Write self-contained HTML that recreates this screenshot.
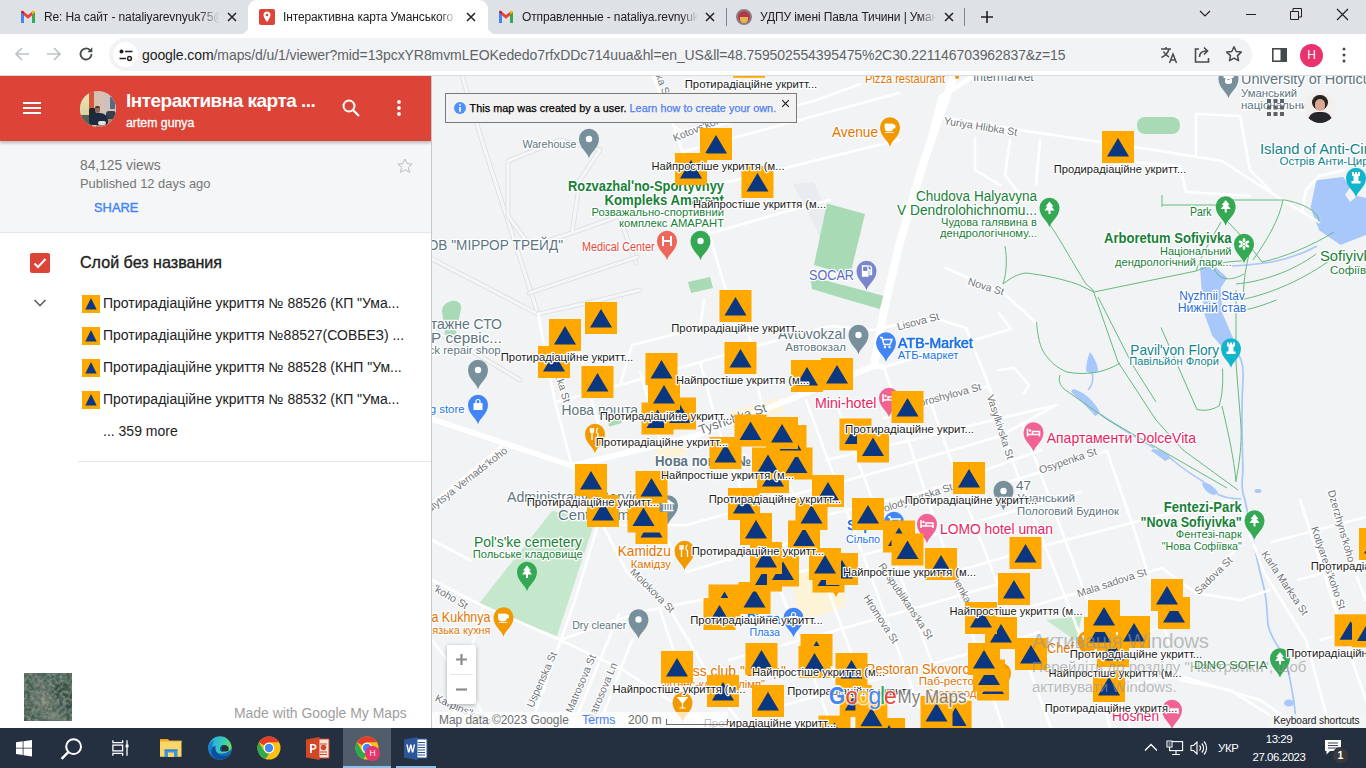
<!DOCTYPE html>
<html>
<head>
<meta charset="utf-8">
<style>
*{box-sizing:border-box;margin:0;padding:0}
html,body{width:1366px;height:768px;overflow:hidden;background:#fff;font-family:"Liberation Sans",sans-serif;}
.abs{position:absolute}
#tabs{position:absolute;left:0;top:0;width:1366px;height:34px;background:#dee1e6}
#toolbar{position:absolute;left:0;top:34px;width:1366px;height:42px;background:#fff;border-bottom:1px solid #dadce0}
.tabtxt{position:absolute;top:10px;font-size:12px;letter-spacing:-.12px;color:#202124;white-space:nowrap;overflow:hidden}
.tabx{position:absolute;top:9px;width:16px;height:16px}
#omni{position:absolute;left:109px;top:4px;width:1143px;height:33px;border-radius:17px;background:#f1f3f4}
#side{position:absolute;left:0;top:76px;width:431px;height:652px;background:#fff;overflow:hidden}
#shdr{position:absolute;left:0;top:0;width:431px;height:65px;background:#db4437;box-shadow:0 2px 3px rgba(0,0,0,.25)}
#sinfo{position:absolute;left:0;top:65px;width:431px;height:92px;background:#f5f6f7;border-bottom:1px solid #e6e6e6}
#map{position:absolute;left:432px;top:76px;width:934px;height:652px;background:#f1f3f4;overflow:hidden}
#task{position:absolute;left:0;top:728px;width:1366px;height:40px;background:#243040}
.row{position:absolute;left:103px;font-size:14px;color:#212121;white-space:nowrap}
.mk{position:absolute;width:18px;height:18px;left:82px;background:#ffa800;margin-top:-1px}
.mk:after{content:"";position:absolute;left:0;top:0;width:18px;height:18px;background:#0a3780;clip-path:polygon(50% 16.7%,18.5% 80.5%,81.5% 80.5%)}
</style>
</head>
<body>
<!-- ================= TAB STRIP ================= -->
<div id="tabs">
  <!-- active tab -->
  <div class="abs" style="left:248px;top:0;width:240px;height:34px;background:#fff;border-radius:9px 9px 0 0"></div>
  <div class="abs" style="left:240px;top:26px;width:8px;height:8px;background:radial-gradient(circle at 0 0,#dee1e6 8px,#fff 8.5px)"></div>
  <div class="abs" style="left:488px;top:26px;width:8px;height:8px;background:radial-gradient(circle at 100% 0,#dee1e6 8px,#fff 8.5px)"></div>
  <!-- tab 1 -->
  <svg class="abs" style="left:20px;top:10px" width="16" height="14" viewBox="0 0 16 14"><path d="M1 13V2.2L3 1l5 4 5-4 2 1.2V13h-3V5.5L8 8.7 4 5.5V13z" fill="#ea4335"/><path d="M1 13V2.2L4 4.6V13z" fill="#4285f4"/><path d="M15 13V2.2L12 4.6V13z" fill="#34a853"/><path d="M12 4.6l3-2.4V2.2C15 .9 13.6.5 12.8 1.2L12 1.8z" fill="#fbbc04"/><path d="M4 4.6L1 2.2C1 .9 2.4.5 3.2 1.2L4 1.8z" fill="#c5221f"/></svg>
  <div class="tabtxt" style="left:44px;width:176px;-webkit-mask-image:linear-gradient(90deg,#000 88%,transparent)">Re: На сайт - nataliyarevnyuk75@g</div>
  <svg class="tabx" style="left:224px" viewBox="0 0 16 16"><path d="M4 4l8 8M12 4l-8 8" stroke="#202124" stroke-width="1.5"/></svg>
  <!-- tab 2 -->
  <div class="abs" style="left:259px;top:9px;width:16px;height:16px;background:#db4437;border-radius:2px"></div>
  <svg class="abs" style="left:259px;top:9px" width="16" height="16" viewBox="0 0 16 16"><path d="M8 2.5c-2 0-3.5 1.5-3.500 3.400 0 2.600 3.500 7 3.500 7s3.500-4.400 3.500-7C11.500 4 10 2.500 8 2.500z" fill="#fff"/><circle cx="8" cy="6" r="1.300" fill="#db4437"/></svg>
  <div class="tabtxt" style="left:283px;width:174px;-webkit-mask-image:linear-gradient(90deg,#000 90%,transparent)">Інтерактивна карта Уманського р</div>
  <svg class="tabx" style="left:463px" viewBox="0 0 16 16"><path d="M4 4l8 8M12 4l-8 8" stroke="#202124" stroke-width="1.5"/></svg>
  <!-- tab 3 -->
  <svg class="abs" style="left:498px;top:10px" width="16" height="14" viewBox="0 0 16 14"><path d="M1 13V2.2L3 1l5 4 5-4 2 1.2V13h-3V5.5L8 8.7 4 5.5V13z" fill="#ea4335"/><path d="M1 13V2.2L4 4.6V13z" fill="#4285f4"/><path d="M15 13V2.2L12 4.6V13z" fill="#34a853"/><path d="M12 4.6l3-2.400V2.200C15 .9 13.600.5 12.800 1.200L12 1.800z" fill="#fbbc04"/><path d="M4 4.600L1 2.200C1 .9 2.400.5 3.200 1.200L4 1.800z" fill="#c5221f"/></svg>
  <div class="tabtxt" style="left:522px;width:176px;-webkit-mask-image:linear-gradient(90deg,#000 90%,transparent)">Отправленные - nataliya.revnyuk</div>
  <svg class="tabx" style="left:702px" viewBox="0 0 16 16"><path d="M4 4l8 8M12 4l-8 8" stroke="#202124" stroke-width="1.5"/></svg>
  <div class="abs" style="left:726px;top:8px;width:1px;height:18px;background:#80868b"></div>
  <!-- tab 4 -->
  <div class="abs" style="left:736px;top:9px;width:16px;height:16px;border-radius:8px;background:#b23a48;border:2px solid #8a7f86"></div>
  <div class="abs" style="left:740px;top:17px;width:8px;height:6px;background:#e8b64c;border-radius:0 0 4px 4px"></div>
  <div class="tabtxt" style="left:760px;width:176px;-webkit-mask-image:linear-gradient(90deg,#000 90%,transparent)">УДПУ імені Павла Тичини | Умань</div>
  <svg class="tabx" style="left:941px" viewBox="0 0 16 16"><path d="M4 4l8 8M12 4l-8 8" stroke="#202124" stroke-width="1.5"/></svg>
  <div class="abs" style="left:964px;top:8px;width:1px;height:18px;background:#80868b"></div>
  <svg class="abs" style="left:979px;top:9px" width="16" height="16" viewBox="0 0 16 16"><path d="M8 2v12M2 8h12" stroke="#202124" stroke-width="1.600"/></svg>
  <!-- window controls -->
  <svg class="abs" style="left:1198px;top:8px" width="14" height="12" viewBox="0 0 14 12"><path d="M2 3l5 5 5-5" stroke="#202124" stroke-width="1.200" fill="none"/></svg>
  <div class="abs" style="left:1246px;top:14px;width:10px;height:1px;background:#202124"></div>
  <svg class="abs" style="left:1290px;top:8px" width="12" height="12" viewBox="0 0 12 12"><path d="M.5 3.500h8v8h-8z M3 3.500V.5h8.500v8.500H8.500" stroke="#202124" stroke-width="1" fill="none"/></svg>
  <svg class="abs" style="left:1336px;top:8px" width="13" height="13" viewBox="0 0 13 13"><path d="M1 1l11 11M12 1L1 12" stroke="#202124" stroke-width="1.200"/></svg>
</div>
<!-- ================= TOOLBAR ================= -->
<div id="toolbar">
  <svg class="abs" style="left:14px;top:12px" width="16" height="16" viewBox="0 0 16 16"><path d="M15 8H2M8 2L2 8l6 6" stroke="#bdc1c6" stroke-width="1.700" fill="none"/></svg>
  <svg class="abs" style="left:46px;top:12px" width="16" height="16" viewBox="0 0 16 16"><path d="M1 8h13M8 2l6 6-6 6" stroke="#bdc1c6" stroke-width="1.700" fill="none"/></svg>
  <svg class="abs" style="left:78px;top:12px" width="16" height="16" viewBox="0 0 16 16"><path d="M13.500 8a5.500 5.500 0 1 1-1.700-4" stroke="#474a4d" stroke-width="1.800" fill="none"/><path d="M14.300 1.300v5h-5z" fill="#474a4d"/></svg>
  <div id="omni">
    <div class="abs" style="left:4px;top:4px;width:25px;height:25px;border-radius:13px;background:#fff"></div>
    <svg class="abs" style="left:9px;top:9px" width="16" height="16" viewBox="0 0 16 16"><path d="M7 4.500h7.500M1.500 11.500h6.500" stroke="#202124" stroke-width="1.600" fill="none"/><circle cx="3.500" cy="4.500" r="2" fill="#202124"/><circle cx="11.500" cy="11.500" r="1.900" fill="none" stroke="#202124" stroke-width="1.500"/></svg>
    <div class="abs" style="left:33px;top:9px;font-size:14px;color:#5f6368;white-space:nowrap;letter-spacing:-0.083px"><span style="color:#202124">google.com</span>/maps/d/u/1/viewer?mid=13pcxYR8mvmLEOKededo7rfxDDc714uua&amp;hl=en_US&amp;ll=48.759502554395475%2C30.221146703962837&amp;z=15</div>
    <!-- translate -->
    <svg class="abs" style="left:1050px;top:7px" width="20" height="20" viewBox="0 0 20 20"><path d="M2 4h10M7 2v2M10 4c-.8 3.500-3.500 6.500-7.500 8.500M4.500 6.500c1.200 2.500 3 4.300 5.500 5.500" stroke="#474a4d" stroke-width="1.500" fill="none"/><path d="M10.500 18l3.500-9 3.500 9M11.800 15h4.500" stroke="#474a4d" stroke-width="1.500" fill="none"/></svg>
    <!-- share -->
    <svg class="abs" style="left:1083px;top:7px" width="20" height="20" viewBox="0 0 20 20"><path d="M7 4H3.500v13h13v-4" stroke="#474a4d" stroke-width="1.600" fill="none"/><path d="M7.500 12c0-4 2.500-6 7-6M12 2.500L15.500 6 12 9.500" stroke="#474a4d" stroke-width="1.600" fill="none"/></svg>
    <!-- star -->
    <svg class="abs" style="left:1115px;top:6px" width="20" height="20" viewBox="0 0 20 20"><path d="M10 2.800l2.200 4.700 5.100.6-3.800 3.500 1 5.100L10 14.200l-4.500 2.500 1-5.100L2.700 8.100l5.100-.6z" stroke="#474a4d" stroke-width="1.500" fill="none" stroke-linejoin="round"/></svg>
  </div>
  <!-- side panel -->
  <svg class="abs" style="left:1272px;top:14px" width="15" height="14" viewBox="0 0 15 14"><rect x=".8" y=".8" width="13.400" height="12.400" fill="none" stroke="#474a4d" stroke-width="1.600"/><rect x="8.500" y="1" width="5.500" height="12" fill="#474a4d"/></svg>
  <div class="abs" style="left:1300px;top:10px;width:23px;height:23px;border-radius:12px;background:#e8336d;color:#fff;font-size:12px;text-align:center;line-height:23px">H</div>
  <svg class="abs" style="left:1341px;top:12px" width="6" height="18" viewBox="0 0 6 18"><circle cx="3" cy="3" r="1.500" fill="#474a4d"/><circle cx="3" cy="9" r="1.500" fill="#474a4d"/><circle cx="3" cy="15" r="1.500" fill="#474a4d"/></svg>
</div>
<!-- ================= SIDEBAR ================= -->
<div id="side">
  <div id="sinfo">
    <div class="abs" style="left:80px;top:17px;font-size:13.800px;color:#757575">84,125 views</div>
    <div class="abs" style="left:80px;top:34.800px;font-size:12.900px;color:#757575">Published 12 days ago</div>
    <div class="abs" style="left:94px;top:59px;font-size:12.900px;color:#4285f4;-webkit-text-stroke:.4px #4285f4">SHARE</div>
    <svg class="abs" style="left:396px;top:16px" width="18" height="18" viewBox="0 0 18 18"><path d="M9 2l2.100 4.600 5 .5-3.700 3.300 1.100 4.900L9 12.800l-4.500 2.500 1.100-4.900L1.900 7.100l5-.5z" stroke="#bdbdbd" stroke-width="1" fill="none"/></svg>
  </div>
  <div id="shdr">
    <svg class="abs" style="left:22px;top:25px" width="20" height="14" viewBox="0 0 20 14"><path d="M1 2h18M1 7h18M1 12h18" stroke="#fff" stroke-width="2"/></svg>
    <div class="abs" id="avatar" style="left:80px;top:15px;width:36px;height:36px;border-radius:18px;overflow:hidden;background:#d9c0b2">
      <div class="abs" style="left:0;top:0;width:9px;height:26px;background:linear-gradient(#efe6b8,#d8cfa0)"></div>
      <div class="abs" style="left:9px;top:0;width:5px;height:20px;background:#d6563a"></div>
      <div class="abs" style="left:24px;top:2px;width:12px;height:34px;background:#cfc2bd"></div>
      <div class="abs" style="left:30px;top:6px;width:5px;height:12px;background:#5b6a80"></div>
      <div class="abs" style="left:0;top:24px;width:12px;height:12px;background:#5a5f58"></div>
      <div class="abs" style="left:9px;top:17px;width:7px;height:16px;background:#25272b;border-radius:2px"></div>
      <div class="abs" style="left:26px;top:20px;width:10px;height:9px;background:#3a3f4a;border-radius:3px"></div>
      <div class="abs" style="left:16px;top:28px;width:20px;height:8px;background:#a8826c"></div>
      <div class="abs" style="left:10px;top:22px;width:18px;height:12px;background:#1d2a42;border-radius:6px 8px 3px 3px"></div>
      <div class="abs" style="left:14.500px;top:15px;width:5px;height:7px;background:#8a6c5e;border-radius:2.500px"></div>
      <div class="abs" style="left:14.500px;top:14.500px;width:5px;height:2.500px;background:#4a3a32;border-radius:2px 2px 0 0"></div>
      <div class="abs" style="left:18px;top:30px;width:8px;height:4px;background:#e4e0e0;border-radius:2px"></div>
    </div>
    <div class="abs" style="left:126px;top:13.500px;font-size:19px;color:#fff;white-space:nowrap;font-weight:bold;letter-spacing:-.52px">Інтерактивна карта ...</div>
    <div class="abs" style="left:126px;top:40px;font-size:12.300px;color:#fff;white-space:nowrap;-webkit-text-stroke:.3px #fff">artem gunya</div>
    <svg class="abs" style="left:340px;top:21px" width="22" height="22" viewBox="0 0 22 22"><circle cx="9" cy="9" r="5.500" stroke="#fff" stroke-width="2" fill="none"/><path d="M13 13l6 6" stroke="#fff" stroke-width="2.200"/></svg>
    <svg class="abs" style="left:396px;top:22px" width="6" height="20" viewBox="0 0 6 20"><circle cx="3" cy="4" r="1.900" fill="#fff"/><circle cx="3" cy="10" r="1.900" fill="#fff"/><circle cx="3" cy="16" r="1.900" fill="#fff"/></svg>
  </div>
  <!-- layer -->
  <div class="abs" style="left:30px;top:177px;width:20px;height:20px;border-radius:2px;background:#db4437"></div>
  <svg class="abs" style="left:30px;top:177px" width="20" height="20" viewBox="0 0 20 20"><path d="M4.500 10.500l3.500 3.500 7.500-8" stroke="#fff" stroke-width="2" fill="none"/></svg>
  <div class="abs" style="left:80px;top:177.200px;font-size:16.100px;color:#212121;-webkit-text-stroke:.35px #212121">Слой без названия</div>
  <svg class="abs" style="left:33px;top:222px" width="14" height="10" viewBox="0 0 14 10"><path d="M1.500 2l5.500 5.500L12.500 2" stroke="#616161" stroke-width="1.600" fill="none"/></svg>
  <div class="mk" style="top:220px"></div><div class="row" style="top:219px">Протирадіаційне укриття № 88526 (КП "Ума...</div>
  <div class="mk" style="top:252px"></div><div class="row" style="top:251px">Протирадіаційне укриття №88527(СОВБЕЗ) ...</div>
  <div class="mk" style="top:284px"></div><div class="row" style="top:283px">Протирадіаційне укриття № 88528 (КНП "Ум...</div>
  <div class="mk" style="top:316px"></div><div class="row" style="top:315px">Протирадіаційне укриття № 88532 (КП "Ума...</div>
  <div class="row" style="top:347px">... 359 more</div>
  <div class="abs" style="left:78px;top:385px;width:353px;height:1px;background:#e6e6e6"></div>
  <!-- satellite thumb -->
  <div class="abs" id="sat" style="left:24px;top:597px;width:48px;height:48px;overflow:hidden;background:
radial-gradient(ellipse 13px 11px at 37px 19px,rgba(30,52,44,.95),rgba(30,52,44,0) 100%),
radial-gradient(ellipse 7px 14px at 46px 30px,rgba(36,58,52,.9),rgba(36,58,52,0) 100%),
radial-gradient(ellipse 17px 19px at 20px 27px,rgba(124,124,112,.95),rgba(112,114,102,0) 100%),
radial-gradient(ellipse 13px 7px at 30px 44px,rgba(134,132,120,.85),rgba(120,120,110,0) 100%),
radial-gradient(ellipse 10px 8px at 14px 8px,rgba(100,112,100,.8),rgba(96,108,96,0) 100%),
#40584e"><svg width="48" height="48" style="position:absolute;left:0;top:0"><filter id="sn" x="0" y="0" width="100%" height="100%"><feTurbulence type="fractalNoise" baseFrequency=".28" numOctaves="3" seed="7"/><feColorMatrix type="matrix" values="0 0 0 0 .56  0 0 0 0 .56  0 0 0 0 .47  1.15 0 0 0 -.42"/></filter><filter id="sd" x="0" y="0" width="100%" height="100%"><feTurbulence type="fractalNoise" baseFrequency=".22" numOctaves="3" seed="23"/><feColorMatrix type="matrix" values="0 0 0 0 .1  0 0 0 0 .18  0 0 0 0 .15  0 1.3 0 0 -.42"/></filter><rect width="48" height="48" filter="url(#sd)"/><rect width="48" height="48" filter="url(#sn)"/></svg></div>
  <div class="abs" style="left:234px;top:629px;font-size:13.950px;color:#9e9e9e;white-space:nowrap">Made with Google My Maps</div>
</div>
<div class="abs" style="left:431px;top:76px;width:1px;height:652px;background:#c8c8c8"></div>
<!-- ================= MAP ================= -->
<div id="map">
<!--MAP-START-->
<svg class="abs" style="left:0;top:0" width="934" height="652" viewBox="432 76 934 652" font-family="Liberation Sans, sans-serif">
<rect x="431" y="76" width="935" height="652" fill="#f1f3f4"/>
<path d="M552 511L596 518 557 636 536 628 520 621 478 605z" fill="#c5e8cc"/>
<path d="M793 184L814 182 840 246 829 257 810 216z" fill="#e9ebee"/>
<path d="M827 203.500L865 214 850 275.500 814 265z" fill="#a8dab5"/>
<path d="M810 276L835 283 858 289 884 296 880 309 845 299 812 289z" fill="#a8dab5"/>
<rect x="1137" y="117" width="43" height="17" rx="8" fill="#a8dab5"/>
<path d="M688 282L710 277 713 288 691 293z" fill="#a8dab5"/>
<path d="M449 302c6-3 13 0 12 7l-5 24c-2 6-10 6-11 0l-3-22c0-4 3-8 7-9z" fill="#a8dab5"/>
<path d="M1046 620L1082 616 1076 641z" fill="#c5e8cc"/>
<rect x="608" y="418" width="13" height="7" fill="#a8dab5" transform="rotate(-15 614 421)"/>
<path d="M790 576L838 566 846 606 800 622z" fill="#fdf3d6"/>
<path d="M728 412L780 398 784 411 732 425z" fill="#fdf3d6"/><path d="M655 447L684 440 687 454 659 461z" fill="#fdf3d6"/>
<path d="M1317.200 181.300L1342.600 177.900 1349 187.200 1343.900 194.900 1349.900 203.400 1357.500 197 1366 199V234L1340.500 243.700 1320 229.700 1311.600 207.600z" fill="#a8c7fa" stroke="#a8c7fa" stroke-width="2" stroke-linejoin="round"/>
<path d="M1201 267L1215 268 1226 278 1219.500 288 1221.600 314 1234 343 1238 350 1228 352 1213 335 1205.500 314 1202.500 288z" fill="#a8c7fa" stroke="#a8c7fa" stroke-width="2" stroke-linejoin="round"/>
<path d="M1090 352c4 5 8 13 8 19-3 3-9 3-12 0 0-7 2-14 4-19z" fill="#a8c7fa"/>
<path d="M1073 389c10 2 22 12 27 24l-5 3c-8-10-18-18-24-24z" fill="#a8c7fa"/>
<path d="M1153 449c7 0 15 4 18 9l-6 3c-5-4-10-8-14-10z" fill="#a8c7fa"/>
<path d="M1203 482c6 1 12 5 15 11l-4 2c-6-1-10-6-12-11z" fill="#a8c7fa"/>
<path d="M1092 372c2 8 0 14-4 18M1100 414c20 14 38 24 54 34M1170 458c12 10 24 18 34 24M1217 494c8 4 16 5 24 5" stroke="#a8c7fa" stroke-width="1.600" fill="none"/>
<path d="M1234 350C1242 356 1244 366 1243 380C1241 410 1242 440 1243 470C1242 482 1241 490 1245 500C1247 510 1249 520 1251 529C1254 545 1258 565 1264 588C1267 600 1267 612 1268 625C1270 634 1274 640 1277 645C1282 652 1285 658 1287 665C1290 678 1292 690 1294 702C1295 712 1296 720 1297 728" stroke="#a8c7fa" stroke-width="1.700" fill="none"/>
<path d="M1228 266c14 0 30-2 44-4 20-4 34-10 45-16" stroke="#a8c7fa" stroke-width="1.600" fill="none"/>
<ellipse cx="1289" cy="703" rx="5" ry="3.500" fill="#a8c7fa"/><ellipse cx="1258" cy="491" rx="3.500" ry="2" fill="#a8c7fa"/>
<path d="M462 76L485 150 538 314" stroke="#d9dce0" stroke-width="4.7" fill="none" stroke-linecap="round" stroke-linejoin="round"/>
<path d="M462 76L485 150 538 314" stroke="#f5f6f7" stroke-width="3.1999999999999997" fill="none" stroke-linecap="round" stroke-linejoin="round"/>
<path d="M508 161L508 216 530 246 572 233 619 216 636 263M572 233L580 180 600 150 560 140 508 161" stroke="#d9dce0" stroke-width="4.7" fill="none" stroke-linecap="round" stroke-linejoin="round"/>
<path d="M508 161L508 216 530 246 572 233 619 216 636 263M572 233L580 180 600 150 560 140 508 161" stroke="#f5f6f7" stroke-width="3.1999999999999997" fill="none" stroke-linecap="round" stroke-linejoin="round"/>
<path d="M432 259L538 314" stroke="#d9dce0" stroke-width="4.7" fill="none" stroke-linecap="round" stroke-linejoin="round"/>
<path d="M432 259L538 314" stroke="#f5f6f7" stroke-width="3.1999999999999997" fill="none" stroke-linecap="round" stroke-linejoin="round"/>
<path d="M538 314L600 300 640 290" stroke="#d9dce0" stroke-width="4.7" fill="none" stroke-linecap="round" stroke-linejoin="round"/>
<path d="M538 314L600 300 640 290" stroke="#f5f6f7" stroke-width="3.1999999999999997" fill="none" stroke-linecap="round" stroke-linejoin="round"/>
<path d="M432 330L470 350 520 380" stroke="#d9dce0" stroke-width="4.7" fill="none" stroke-linecap="round" stroke-linejoin="round"/>
<path d="M432 330L470 350 520 380" stroke="#f5f6f7" stroke-width="3.1999999999999997" fill="none" stroke-linecap="round" stroke-linejoin="round"/>
<path d="M529 293L637 257" stroke="#d9dce0" stroke-width="4.7" fill="none" stroke-linecap="round" stroke-linejoin="round"/>
<path d="M529 293L637 257" stroke="#f5f6f7" stroke-width="3.1999999999999997" fill="none" stroke-linecap="round" stroke-linejoin="round"/>
<path d="M538 314L555 402 572 466" stroke="#fff" stroke-width="2.6" fill="none" stroke-linecap="round" stroke-linejoin="round"/>
<path d="M653 76L674 127 704 216 725 288 750 339 761 402 772 440" stroke="#fff" stroke-width="2.6" fill="none" stroke-linecap="round" stroke-linejoin="round"/>
<path d="M674 127L687 133 814 101 860 84" stroke="#fff" stroke-width="2.6" fill="none" stroke-linecap="round" stroke-linejoin="round"/>
<path d="M682 152L899 93" stroke="#fff" stroke-width="2.6" fill="none" stroke-linecap="round" stroke-linejoin="round"/>
<path d="M695 190L899 140" stroke="#fff" stroke-width="2.6" fill="none" stroke-linecap="round" stroke-linejoin="round"/>
<path d="M712 233L784 212 830 200" stroke="#fff" stroke-width="2.6" fill="none" stroke-linecap="round" stroke-linejoin="round"/>
<path d="M555 402L620 385 700 362 760 345 830 326 874 330" stroke="#fff" stroke-width="2.6" fill="none" stroke-linecap="round" stroke-linejoin="round"/>
<path d="M600 430L584 372 578 330" stroke="#fff" stroke-width="2.6" fill="none" stroke-linecap="round" stroke-linejoin="round"/>
<path d="M640 372L660 440" stroke="#fff" stroke-width="2.6" fill="none" stroke-linecap="round" stroke-linejoin="round"/>
<path d="M700 362L718 428" stroke="#fff" stroke-width="2.6" fill="none" stroke-linecap="round" stroke-linejoin="round"/>
<path d="M620 385L632 345 700 328 704 300" stroke="#fff" stroke-width="2.6" fill="none" stroke-linecap="round" stroke-linejoin="round"/>
<path d="M432 504L504 444 538 453" stroke="#fff" stroke-width="2.6" fill="none" stroke-linecap="round" stroke-linejoin="round"/>
<path d="M432 580L483 606 560 640 620 668 700 720" stroke="#fff" stroke-width="2.6" fill="none" stroke-linecap="round" stroke-linejoin="round"/>
<path d="M432 540L470 560" stroke="#fff" stroke-width="2.6" fill="none" stroke-linecap="round" stroke-linejoin="round"/>
<path d="M432 640L470 690 490 728" stroke="#fff" stroke-width="2.6" fill="none" stroke-linecap="round" stroke-linejoin="round"/>
<path d="M483 606L450 728" stroke="#fff" stroke-width="2.6" fill="none" stroke-linecap="round" stroke-linejoin="round"/>
<path d="M572 466L602 512 575 600 530 728" stroke="#fff" stroke-width="2.6" fill="none" stroke-linecap="round" stroke-linejoin="round"/>
<path d="M619 614L572 728" stroke="#fff" stroke-width="2.6" fill="none" stroke-linecap="round" stroke-linejoin="round"/>
<path d="M632 640L598 728" stroke="#fff" stroke-width="2.6" fill="none" stroke-linecap="round" stroke-linejoin="round"/>
<path d="M560 640L640 612 700 600" stroke="#fff" stroke-width="2.6" fill="none" stroke-linecap="round" stroke-linejoin="round"/>
<path d="M572 466L627 572 670 610 729 708 745 728" stroke="#fff" stroke-width="2.6" fill="none" stroke-linecap="round" stroke-linejoin="round"/>
<path d="M598 525L687 525 793 495 899 466 1000 436 1056 405" stroke="#fff" stroke-width="2.6" fill="none" stroke-linecap="round" stroke-linejoin="round"/>
<path d="M602 512L660 500" stroke="#fff" stroke-width="2.6" fill="none" stroke-linecap="round" stroke-linejoin="round"/>
<path d="M640 470L655 520 687 572" stroke="#fff" stroke-width="2.6" fill="none" stroke-linecap="round" stroke-linejoin="round"/>
<path d="M687 572L720 562 800 540" stroke="#fff" stroke-width="2.6" fill="none" stroke-linecap="round" stroke-linejoin="round"/>
<path d="M660 610L690 700" stroke="#fff" stroke-width="2.6" fill="none" stroke-linecap="round" stroke-linejoin="round"/>
<path d="M718 428L760 540 800 640 832 728" stroke="#fff" stroke-width="2.6" fill="none" stroke-linecap="round" stroke-linejoin="round"/>
<path d="M772 440L810 540 850 650 880 728" stroke="#fff" stroke-width="2.6" fill="none" stroke-linecap="round" stroke-linejoin="round"/>
<path d="M806 400L850 520 886 617 927 728" stroke="#fff" stroke-width="2.6" fill="none" stroke-linecap="round" stroke-linejoin="round"/>
<path d="M835 400L880 520 918 625 956 728" stroke="#fff" stroke-width="2.6" fill="none" stroke-linecap="round" stroke-linejoin="round"/>
<path d="M884 367L914 458 958 590 1003 728" stroke="#fff" stroke-width="2.6" fill="none" stroke-linecap="round" stroke-linejoin="round"/>
<path d="M930 400L965 500 1000 590 1051 728" stroke="#fff" stroke-width="2.6" fill="none" stroke-linecap="round" stroke-linejoin="round"/>
<path d="M700 600L800 572 900 545 1000 515 1080 492" stroke="#fff" stroke-width="2.6" fill="none" stroke-linecap="round" stroke-linejoin="round"/>
<path d="M729 660L830 632 930 604 1005 582" stroke="#fff" stroke-width="2.6" fill="none" stroke-linecap="round" stroke-linejoin="round"/>
<path d="M760 712L860 684 960 656 1040 632" stroke="#fff" stroke-width="2.6" fill="none" stroke-linecap="round" stroke-linejoin="round"/>
<path d="M884 418L989 386" stroke="#fff" stroke-width="2.6" fill="none" stroke-linecap="round" stroke-linejoin="round"/>
<path d="M826 460L899 443 1056 405" stroke="#fff" stroke-width="2.6" fill="none" stroke-linecap="round" stroke-linejoin="round"/>
<path d="M817 517L925 492 1041 450" stroke="#fff" stroke-width="2.6" fill="none" stroke-linecap="round" stroke-linejoin="round"/>
<path d="M874 330L899 324 937 319 966 328 986 378 1000 418 1012 460 1035 521 1069 606 1100 690 1110 728" stroke="#fff" stroke-width="2.6" fill="none" stroke-linecap="round" stroke-linejoin="round"/>
<path d="M884 367L974 340 1011 329 999 313" stroke="#fff" stroke-width="2.6" fill="none" stroke-linecap="round" stroke-linejoin="round"/>
<path d="M999 370L1014 368 1029 385 1024 393" stroke="#fff" stroke-width="2.6" fill="none" stroke-linecap="round" stroke-linejoin="round"/>
<path d="M946 268L1006 295 1036 323" stroke="#fff" stroke-width="2.6" fill="none" stroke-linecap="round" stroke-linejoin="round"/>
<path d="M1022 423L1077 572 1098 627 1130 728" stroke="#fff" stroke-width="2.6" fill="none" stroke-linecap="round" stroke-linejoin="round"/>
<path d="M1005 483L1107 451 1137 538 1150 580 1180 680" stroke="#fff" stroke-width="2.6" fill="none" stroke-linecap="round" stroke-linejoin="round"/>
<path d="M954 572L1043 546 1154 517 1230 500" stroke="#fff" stroke-width="2.6" fill="none" stroke-linecap="round" stroke-linejoin="round"/>
<path d="M1005 614L1162 568 1196 593 1234 551" stroke="#fff" stroke-width="2.6" fill="none" stroke-linecap="round" stroke-linejoin="round"/>
<path d="M1040 650L1120 640 1160 628" stroke="#fff" stroke-width="2.6" fill="none" stroke-linecap="round" stroke-linejoin="round"/>
<path d="M1100 690L1180 676 1260 700 1300 728" stroke="#fff" stroke-width="2.6" fill="none" stroke-linecap="round" stroke-linejoin="round"/>
<path d="M937 116L1026 131 1154 150 1222 161 1281 199 1319 222" stroke="#fff" stroke-width="2.6" fill="none" stroke-linecap="round" stroke-linejoin="round"/>
<path d="M975 138L975 170 1000 185M1010 140L1005 175 1020 195M1040 140L1036 185" stroke="#fff" stroke-width="2.6" fill="none" stroke-linecap="round" stroke-linejoin="round"/>
<path d="M1102 143L1104 160 1180 166 1186 192 1250 196" stroke="#fff" stroke-width="2.6" fill="none" stroke-linecap="round" stroke-linejoin="round"/>
<path d="M1196 114L1196 156M1196 114L1240 116 1250 170 1270 190" stroke="#fff" stroke-width="2.6" fill="none" stroke-linecap="round" stroke-linejoin="round"/>
<path d="M1302 212L1306 190 1319 176 1345 170" stroke="#fff" stroke-width="2.6" fill="none" stroke-linecap="round" stroke-linejoin="round"/>
<path d="M1240 508L1264 572 1306 640 1330 728" stroke="#fff" stroke-width="2.6" fill="none" stroke-linecap="round" stroke-linejoin="round"/>
<path d="M1300 500L1320 560 1345 640 1366 700" stroke="#fff" stroke-width="2.6" fill="none" stroke-linecap="round" stroke-linejoin="round"/>
<path d="M1335 500L1350 560 1366 600" stroke="#fff" stroke-width="2.6" fill="none" stroke-linecap="round" stroke-linejoin="round"/>
<path d="M1272 542L1366 517" stroke="#fff" stroke-width="2.6" fill="none" stroke-linecap="round" stroke-linejoin="round"/>
<path d="M1298 580L1366 560" stroke="#fff" stroke-width="2.6" fill="none" stroke-linecap="round" stroke-linejoin="round"/>
<path d="M1320 640L1366 628" stroke="#fff" stroke-width="2.6" fill="none" stroke-linecap="round" stroke-linejoin="round"/>
<path d="M1196 593L1240 600 1270 590" stroke="#fff" stroke-width="2.6" fill="none" stroke-linecap="round" stroke-linejoin="round"/>
<path d="M1180 680L1230 690 1290 728" stroke="#fff" stroke-width="2.6" fill="none" stroke-linecap="round" stroke-linejoin="round"/>
<path d="M954 76L924 161 899 246 884 310 874 366" stroke="#fff" stroke-width="8" fill="none" stroke-linecap="round" stroke-linejoin="round"/>
<path d="M973 76L941 97 924 161" stroke="#fff" stroke-width="5" fill="none" stroke-linecap="round" stroke-linejoin="round"/>
<path d="M874 366L763 410 695 436 572 466" stroke="#fff" stroke-width="6" fill="none" stroke-linecap="round" stroke-linejoin="round"/>
<path d="M572 466L432 419" stroke="#fff" stroke-width="5.5" fill="none" stroke-linecap="round" stroke-linejoin="round"/>
<path d="M874 366L884 367" stroke="#fff" stroke-width="5" fill="none" stroke-linecap="round" stroke-linejoin="round"/>
<path d="M1050 225c10 14 24 40 36 59l7 6M1005 246c2 12 2 26-2 38M1003 284c8-6 14-10 23-11 18 2 36 6 51 11l17 8M1094 292L1196 271M1221 222c-8 14-18 30-25 49M1228 222c12 12 24 26 34 40M1196 271c14-6 30-10 46-10M1225 200h60c20 4 34 12 34 22M1262 262c20-4 50-16 72-30M1240 300c30-6 64-20 96-44M1236 284c24-2 56-12 80-30M1214 268c4 12 16 14 30 6M1252 240c-4 20-10 40-8 60M1283 200c-4 20-16 40-30 60M1162 205h60M1162 195v12" stroke="#66bb7f" stroke-width="1" fill="none"/>
<path d="M1093 290L1118 362 1156 420 1183 450 1238 490M1036.500 322c1 10 2 20 6.500 29 6 10 14 17 24 21 10 2 20 2 31 0 8-2 16-5 22-9M1060 375c-2 6 0 10 4 14l44 31 65 37 54 31M1098 297l34 67 24 38M1161 327.500l36 82c8 2 16 0 22-3.500 4-12 4-26 3.500-37.500M1236 290v73l5 63c1 20-2 38-5 55M1244.600 310c10-2 22-6 32-10M1222 406c6 26 12 52 14 76" stroke="#66bb7f" stroke-width="1" fill="none"/>
<text x="980" y="130" transform="rotate(9 980 130)" font-size="10.5" fill="#6f7478" stroke="#fff" stroke-width="2.200" paint-order="stroke" stroke-linejoin="round" text-anchor="middle">Yuriya Hlibka St</text>
<text x="985" y="290" transform="rotate(17 985 290)" font-size="10.5" fill="#6f7478" stroke="#fff" stroke-width="2.200" paint-order="stroke" stroke-linejoin="round" text-anchor="middle">Nova St</text>
<text x="919" y="325" transform="rotate(-15 919 325)" font-size="10.5" fill="#6f7478" stroke="#fff" stroke-width="2.200" paint-order="stroke" stroke-linejoin="round" text-anchor="middle">Lisova St</text>
<text x="997" y="428" transform="rotate(72 997 428)" font-size="10.5" fill="#6f7478" stroke="#fff" stroke-width="2.200" paint-order="stroke" stroke-linejoin="round" text-anchor="middle">Vasylkivska St</text>
<text x="1069" y="464" transform="rotate(-19 1069 464)" font-size="10.5" fill="#6f7478" stroke="#fff" stroke-width="2.200" paint-order="stroke" stroke-linejoin="round" text-anchor="middle">Osypenka St</text>
<text x="948" y="399" transform="rotate(-15 948 399)" font-size="10.5" fill="#6f7478" stroke="#fff" stroke-width="2.200" paint-order="stroke" stroke-linejoin="round" text-anchor="middle">Voroshylova St</text>
<text x="467" y="484" transform="rotate(-38 467 484)" font-size="10.5" fill="#6f7478" stroke="#fff" stroke-width="2.200" paint-order="stroke" stroke-linejoin="round" text-anchor="middle">vulytsya Vernads&#39;koho</text>
<text x="650" y="593" transform="rotate(45 650 593)" font-size="10.5" fill="#6f7478" stroke="#fff" stroke-width="2.200" paint-order="stroke" stroke-linejoin="round" text-anchor="middle">Molokova St</text>
<text x="545" y="681" transform="rotate(-66 545 681)" font-size="10.5" fill="#6f7478" stroke="#fff" stroke-width="2.200" paint-order="stroke" stroke-linejoin="round" text-anchor="middle">Uspenska St</text>
<text x="584" y="685" transform="rotate(-67 584 685)" font-size="10.5" fill="#6f7478" stroke="#fff" stroke-width="2.200" paint-order="stroke" stroke-linejoin="round" text-anchor="middle">Matrosova St</text>
<text x="605" y="694" transform="rotate(-67 605 694)" font-size="10.5" fill="#6f7478" stroke="#fff" stroke-width="2.200" paint-order="stroke" stroke-linejoin="round" text-anchor="middle">Matrosova Ln</text>
<text x="878" y="621" transform="rotate(57 878 621)" font-size="10.5" fill="#6f7478" stroke="#fff" stroke-width="2.200" paint-order="stroke" stroke-linejoin="round" text-anchor="middle">Hromova St</text>
<text x="903" y="603" transform="rotate(56 903 603)" font-size="10.5" fill="#6f7478" stroke="#fff" stroke-width="2.200" paint-order="stroke" stroke-linejoin="round" text-anchor="middle">Respublikans&#39;ka St</text>
<text x="1113" y="586" transform="rotate(-18 1113 586)" font-size="10.5" fill="#6f7478" stroke="#fff" stroke-width="2.200" paint-order="stroke" stroke-linejoin="round" text-anchor="middle">Mala sadova St</text>
<text x="1216" y="578" transform="rotate(-45 1216 578)" font-size="10.5" fill="#6f7478" stroke="#fff" stroke-width="2.200" paint-order="stroke" stroke-linejoin="round" text-anchor="middle">Sadova St</text>
<text x="1282" y="585" transform="rotate(56 1282 585)" font-size="10.5" fill="#6f7478" stroke="#fff" stroke-width="2.200" paint-order="stroke" stroke-linejoin="round" text-anchor="middle">Karla Marksa St</text>
<text x="1325" y="569" transform="rotate(71 1325 569)" font-size="10.5" fill="#6f7478" stroke="#fff" stroke-width="2.200" paint-order="stroke" stroke-linejoin="round" text-anchor="middle">Kotlyarevs&#39;koho St</text>
<text x="1338" y="527" transform="rotate(74 1338 527)" font-size="10.5" fill="#6f7478" stroke="#fff" stroke-width="2.200" paint-order="stroke" stroke-linejoin="round" text-anchor="middle">Dzerzhyns&#39;koho</text>
<text x="734" y="423" transform="rotate(-19 734 423)" font-size="13" fill="#6f7478" stroke="#fff" stroke-width="2.200" paint-order="stroke" stroke-linejoin="round" text-anchor="middle">Tyshchka St</text>
<text x="449" y="600" transform="rotate(30 449 600)" font-size="10.5" fill="#6f7478" stroke="#fff" stroke-width="2.200" paint-order="stroke" stroke-linejoin="round" text-anchor="middle">&#39;koho St</text>
<text x="462" y="713" transform="rotate(24 462 713)" font-size="10.5" fill="#6f7478" stroke="#fff" stroke-width="2.200" paint-order="stroke" stroke-linejoin="round" text-anchor="middle">Karpins&#39;koho</text>
<text x="916" y="502" transform="rotate(-18 916 502)" font-size="10.5" fill="#6f7478" stroke="#fff" stroke-width="2.200" paint-order="stroke" stroke-linejoin="round" text-anchor="middle">Volodymyrska St</text>
<text x="558" y="385" transform="rotate(72 558 385)" font-size="10.5" fill="#6f7478" stroke="#fff" stroke-width="2.200" paint-order="stroke" stroke-linejoin="round" text-anchor="middle">P...ka St</text>
<text x="701" y="131" transform="rotate(-22 701 131)" font-size="10.5" fill="#6f7478" stroke="#fff" stroke-width="2.200" paint-order="stroke" stroke-linejoin="round" text-anchor="middle">Kotovs&#39;koho</text>
<text x="658" y="82" transform="rotate(68 658 82)" font-size="10.5" fill="#6f7478" stroke="#fff" stroke-width="2.200" paint-order="stroke" stroke-linejoin="round" text-anchor="middle">vska St</text>
<text x="955" y="584" transform="rotate(62 955 584)" font-size="10.5" fill="#6f7478" stroke="#fff" stroke-width="2.200" paint-order="stroke" stroke-linejoin="round" text-anchor="middle">Shevchenka St</text>
<path d="M589 158.3c-1.200-6-10-10.300-10-19.600a10 10 0 0 1 20 0c0 9.300-8.800 13.600-10 19.600z" fill="#78909c"/>
<circle cx="589" cy="139" r="3.200" fill="#fff"/>
<text x="576.5" y="148" font-size="11.5" fill="#5c7582" stroke="#fff" stroke-width="2.6" paint-order="stroke" stroke-linejoin="round" text-anchor="end" textLength="54" lengthAdjust="spacingAndGlyphs">Warehouse</text>
<text x="724" y="191" font-size="14" fill="#188038" stroke="#fff" stroke-width="2.6" paint-order="stroke" stroke-linejoin="round" text-anchor="end" font-weight="bold" textLength="156" lengthAdjust="spacingAndGlyphs">Rozvazhal&#697;no-Sportyvnyy</text>
<text x="724" y="204.5" font-size="14" fill="#188038" stroke="#fff" stroke-width="2.6" paint-order="stroke" stroke-linejoin="round" text-anchor="end" font-weight="bold" textLength="119.5" lengthAdjust="spacingAndGlyphs">Kompleks Amarant</text>
<text x="724" y="215.5" font-size="11.5" fill="#188038" stroke="#fff" stroke-width="2.6" paint-order="stroke" stroke-linejoin="round" text-anchor="end" textLength="132.5" lengthAdjust="spacingAndGlyphs">Розважально-спортивний</text>
<text x="724" y="226.5" font-size="11.5" fill="#188038" stroke="#fff" stroke-width="2.6" paint-order="stroke" stroke-linejoin="round" text-anchor="end" textLength="105" lengthAdjust="spacingAndGlyphs">комплекс АМАРАНТ</text>
<path d="M700.5 260.3c-1.200-6-10-10.300-10-19.600a10 10 0 0 1 20 0c0 9.300-8.800 13.600-10 19.600z" fill="#34a853"/>
<circle cx="700.5" cy="241" r="3.200" fill="#fff"/>
<path d="M667 260.3c-1.200-6-10-10.300-10-19.600a10 10 0 0 1 20 0c0 9.300-8.800 13.600-10 19.600z" fill="#ee675c"/>
<path d="M663 236v10M671 236v10M663 241h8" stroke="#fff" stroke-width="2" fill="none"/>
<text x="654.5" y="251" font-size="12" fill="#e5483a" stroke="#fff" stroke-width="2.6" paint-order="stroke" stroke-linejoin="round" text-anchor="end" textLength="72.5" lengthAdjust="spacingAndGlyphs">Medical Center</text>
<text x="563" y="249.5" font-size="14.5" fill="#5c7582" stroke="#fff" stroke-width="2.6" paint-order="stroke" stroke-linejoin="round" text-anchor="end" textLength="143" lengthAdjust="spacingAndGlyphs">ТОВ "МІРРОР ТРЕЙД"</text>
<path d="M890 146.8c-1.200-6-10-10.300-10-19.600a10 10 0 0 1 20 0c0 9.300-8.800 13.600-10 19.600z" fill="#f29900"/>
<path d="M885 124.0h8v4a3 3 0 0 1-3 3h-2a3 3 0 0 1-3-3zM893 125.0h2v3h-2M885 132.5h9" fill="#fff" stroke="#fff" stroke-width=".8"/>
<text x="878" y="137" font-size="14.5" fill="#e37400" stroke="#fff" stroke-width="2.6" paint-order="stroke" stroke-linejoin="round" text-anchor="end" textLength="46" lengthAdjust="spacingAndGlyphs">Avenue</text>
<text x="945" y="83" font-size="12" fill="#e37400" stroke="#fff" stroke-width="2.6" paint-order="stroke" stroke-linejoin="round" text-anchor="end" textLength="80" lengthAdjust="spacingAndGlyphs">Pizza restaurant</text>
<text x="973" y="80.5" font-size="12" fill="#5c7582" stroke="#fff" stroke-width="2.6" paint-order="stroke" stroke-linejoin="round" text-anchor="start">Intermarket</text>
<circle cx="957" cy="77" r="2" fill="#f29900"/>
<text x="1037" y="200.5" font-size="14" fill="#188038" stroke="#fff" stroke-width="2.6" paint-order="stroke" stroke-linejoin="round" text-anchor="end" textLength="121" lengthAdjust="spacingAndGlyphs">Chudova Halyavyna</text>
<text x="1037" y="214.5" font-size="14" fill="#188038" stroke="#fff" stroke-width="2.6" paint-order="stroke" stroke-linejoin="round" text-anchor="end" textLength="140" lengthAdjust="spacingAndGlyphs">V Dendrolohichnomu...</text>
<text x="1037" y="226" font-size="11.5" fill="#188038" stroke="#fff" stroke-width="2.6" paint-order="stroke" stroke-linejoin="round" text-anchor="end" textLength="96" lengthAdjust="spacingAndGlyphs">Чудова галявина в</text>
<text x="1037" y="237" font-size="11.5" fill="#188038" stroke="#fff" stroke-width="2.6" paint-order="stroke" stroke-linejoin="round" text-anchor="end" textLength="97" lengthAdjust="spacingAndGlyphs">дендрологічному...</text>
<path d="M1049.5 227.3c-1.200-6-10-10.300-10-19.600a10 10 0 0 1 20 0c0 9.300-8.800 13.600-10 19.600z" fill="#34a853"/>
<path d="M1049.5 201.5l4 5h-2l3 4h-4v3.500h-2v-3.500h-4l3-4h-2z" fill="#fff"/>
<path d="M1228.5 98.3c-1.200-6-10-10.300-10-19.600a10 10 0 0 1 20 0c0 9.300-8.800 13.600-10 19.600z" fill="#78909c"/>
<path d="M1222.5 77l6-3 6 3-6 3zM1225.0 79v3.500c2 2 5 2 7 0v-3.500" fill="#fff"/>
<text x="1241" y="84" font-size="14.5" fill="#5c7582" stroke="#fff" stroke-width="2.6" paint-order="stroke" stroke-linejoin="round" text-anchor="start">University of Horticu</text>
<text x="1241" y="96.5" font-size="11.5" fill="#5c7582" stroke="#fff" stroke-width="2.6" paint-order="stroke" stroke-linejoin="round" text-anchor="start" textLength="56" lengthAdjust="spacingAndGlyphs">Уманський</text>
<text x="1241" y="108.5" font-size="11.5" fill="#5c7582" stroke="#fff" stroke-width="2.6" paint-order="stroke" stroke-linejoin="round" text-anchor="start">національни</text>
<text x="1260" y="153.5" font-size="14.8" fill="#12858d" stroke="#fff" stroke-width="2.6" paint-order="stroke" stroke-linejoin="round" text-anchor="start">Island of Anti-Circe</text>
<text x="1279.5" y="165" font-size="11.5" fill="#12858d" stroke="#fff" stroke-width="2.6" paint-order="stroke" stroke-linejoin="round" text-anchor="start">Острів Анти-Цирцеї</text>
<path d="M1356 197.3c-1.200-6-10-10.300-10-19.600a10 10 0 0 1 20 0c0 9.300-8.800 13.600-10 19.600z" fill="#12b5cb"/>
<path d="M1352 172h2v2h1v-2h2v2h1v-2h2v4h-1.500v5h2v2.500h-9v-2.500h2v-5h-1.500z" fill="#fff"/>
<path d="M1225.7 225.8c-1.200-6-10-10.300-10-19.600a10 10 0 0 1 20 0c0 9.300-8.800 13.600-10 19.600z" fill="#34a853"/>
<path d="M1225.7 200.0l4 5h-2l3 4h-4v3.500h-2v-3.500h-4l3-4h-2z" fill="#fff"/>
<text x="1211.5" y="216" font-size="12" fill="#188038" stroke="#fff" stroke-width="2.6" paint-order="stroke" stroke-linejoin="round" text-anchor="end" textLength="21.5" lengthAdjust="spacingAndGlyphs">Park</text>
<text x="1231.5" y="243" font-size="14" fill="#188038" stroke="#fff" stroke-width="2.6" paint-order="stroke" stroke-linejoin="round" text-anchor="end" font-weight="bold" textLength="127.5" lengthAdjust="spacingAndGlyphs">Arboretum Sofiyivka</text>
<text x="1231.5" y="254.5" font-size="11.5" fill="#188038" stroke="#fff" stroke-width="2.6" paint-order="stroke" stroke-linejoin="round" text-anchor="end" textLength="71.5" lengthAdjust="spacingAndGlyphs">Національний</text>
<text x="1231.5" y="266" font-size="11.5" fill="#188038" stroke="#fff" stroke-width="2.6" paint-order="stroke" stroke-linejoin="round" text-anchor="end" textLength="116.5" lengthAdjust="spacingAndGlyphs">дендрологічний парк...</text>
<path d="M1244 263.3c-1.200-6-10-10.300-10-19.600a10 10 0 0 1 20 0c0 9.300-8.800 13.600-10 19.600z" fill="#34a853"/>
<circle cx="1244" cy="244" r="1.300" fill="#fff"/><ellipse cx="1244.00" cy="240.30" rx="1.350" ry="2.300" transform="rotate(0 1244.00 240.30)" fill="#fff"/><ellipse cx="1247.20" cy="242.15" rx="1.350" ry="2.300" transform="rotate(60 1247.20 242.15)" fill="#fff"/><ellipse cx="1247.20" cy="245.85" rx="1.350" ry="2.300" transform="rotate(120 1247.20 245.85)" fill="#fff"/><ellipse cx="1244.00" cy="247.70" rx="1.350" ry="2.300" transform="rotate(180 1244.00 247.70)" fill="#fff"/><ellipse cx="1240.80" cy="245.85" rx="1.350" ry="2.300" transform="rotate(240 1240.80 245.85)" fill="#fff"/><ellipse cx="1240.80" cy="242.15" rx="1.350" ry="2.300" transform="rotate(300 1240.80 242.15)" fill="#fff"/>
<text x="1320" y="261" font-size="14.8" fill="#188038" stroke="#fff" stroke-width="2.6" paint-order="stroke" stroke-linejoin="round" text-anchor="start">Sofiyivka</text>
<text x="1330" y="274" font-size="11.5" fill="#188038" stroke="#fff" stroke-width="2.6" paint-order="stroke" stroke-linejoin="round" text-anchor="start">Софіївка</text>
<text x="1212" y="299.5" font-size="12.3" fill="#2a6fd6" stroke="#fff" stroke-width="2.6" paint-order="stroke" stroke-linejoin="round" text-anchor="middle" textLength="65.7" lengthAdjust="spacingAndGlyphs">Nyzhnii Stav</text>
<text x="1212" y="312" font-size="12.3" fill="#2a6fd6" stroke="#fff" stroke-width="2.6" paint-order="stroke" stroke-linejoin="round" text-anchor="middle" textLength="68.7" lengthAdjust="spacingAndGlyphs">Нижній став</text>
<text x="1219" y="354.5" font-size="14.5" fill="#12858d" stroke="#fff" stroke-width="2.6" paint-order="stroke" stroke-linejoin="round" text-anchor="end" textLength="88.7" lengthAdjust="spacingAndGlyphs">Pavil&#697;yon Flory</text>
<text x="1219" y="364.5" font-size="11.5" fill="#12858d" stroke="#fff" stroke-width="2.6" paint-order="stroke" stroke-linejoin="round" text-anchor="end" textLength="89.7" lengthAdjust="spacingAndGlyphs">Павільйон Флори</text>
<path d="M1231 367.8c-1.200-6-10-10.300-10-19.600a10 10 0 0 1 20 0c0 9.300-8.800 13.600-10 19.600z" fill="#12b5cb"/>
<path d="M1227 342.5h2v2h1v-2h2v2h1v-2h2v4h-1.500v5h2v2.500h-9v-2.500h2v-5h-1.500z" fill="#fff"/>
<path d="M1033.5 451.8c-1.200-6-10-10.300-10-19.600a10 10 0 0 1 20 0c0 9.300-8.800 13.600-10 19.600z" fill="#f06292"/>
<path d="M1027.5 428.5v8M1027.5 434.5h12v-3h-7v3M1039.5 431.5v5" stroke="#fff" stroke-width="1.500" fill="none"/><circle cx="1030.0" cy="430.5" r="1.200" fill="#fff"/>
<text x="1046.7" y="443" font-size="14.3" fill="#e91e63" stroke="#fff" stroke-width="2.6" paint-order="stroke" stroke-linejoin="round" text-anchor="start" textLength="149.3" lengthAdjust="spacingAndGlyphs">Апартаменти DolceVita</text>
<path d="M886 361.8c-1.200-6-10-10.300-10-19.600a10 10 0 0 1 20 0c0 9.300-8.800 13.600-10 19.600z" fill="#4285f4"/>
<path d="M880 337.5h2l2 7h6l2-5h-9" stroke="#fff" stroke-width="1.400" fill="none"/><circle cx="885" cy="347.0" r="1.200" fill="#fff"/><circle cx="889.5" cy="347.0" r="1.200" fill="#fff"/>
<text x="897.75" y="348" font-size="14.3" fill="#1a73e8" stroke="#fff" stroke-width="2.6" paint-order="stroke" stroke-linejoin="round" text-anchor="start" textLength="75" lengthAdjust="spacingAndGlyphs">ATB-Market</text>
<text x="897.75" y="348" font-size="14.3" fill="#1a73e8" stroke="#1a73e8" stroke-width=".3" text-anchor="start" textLength="75" lengthAdjust="spacingAndGlyphs">ATB-Market</text>
<text x="897.75" y="358.5" font-size="11.5" fill="#1a73e8" stroke="#fff" stroke-width="2.6" paint-order="stroke" stroke-linejoin="round" text-anchor="start" textLength="60.75" lengthAdjust="spacingAndGlyphs">АТБ-маркет</text>
<path d="M858.5 354.3c-1.200-6-10-10.300-10-19.600a10 10 0 0 1 20 0c0 9.300-8.800 13.600-10 19.600z" fill="#78909c"/>
<circle cx="858.5" cy="335" r="3.200" fill="#fff"/>
<text x="845.5" y="338.5" font-size="14.5" fill="#5c7582" stroke="#fff" stroke-width="2.6" paint-order="stroke" stroke-linejoin="round" text-anchor="end" textLength="67.5" lengthAdjust="spacingAndGlyphs">Avtovokzal</text>
<text x="846" y="350.5" font-size="11.5" fill="#5c7582" stroke="#fff" stroke-width="2.6" paint-order="stroke" stroke-linejoin="round" text-anchor="end" textLength="60.75" lengthAdjust="spacingAndGlyphs">Автовокзал</text>
<path d="M866.5 290.3c-1.200-6-10-10.300-10-19.600a10 10 0 0 1 20 0c0 9.300-8.800 13.600-10 19.600z" fill="#7986cb"/>
<path d="M862.5 266h5.500v10h-5.500zM868.0 270h2v4.500h1.500v-7l-2-2" stroke="#fff" stroke-width="1.300" fill="none"/><path d="M862.5 271h5.500v5h-5.500z" fill="#fff"/>
<text x="854" y="280" font-size="14.3" fill="#5c6bc0" stroke="#fff" stroke-width="2.6" paint-order="stroke" stroke-linejoin="round" text-anchor="end" textLength="45" lengthAdjust="spacingAndGlyphs">SOCAR</text>
<path d="M889 417.3c-1.200-6-10-10.300-10-19.600a10 10 0 0 1 20 0c0 9.300-8.800 13.600-10 19.600z" fill="#f06292"/>
<path d="M883 394v8M883 400h12v-3h-7v3M895 397v5" stroke="#fff" stroke-width="1.500" fill="none"/><circle cx="885.5" cy="396" r="1.200" fill="#fff"/>
<text x="876.5" y="408" font-size="14.3" fill="#e91e63" stroke="#fff" stroke-width="2.6" paint-order="stroke" stroke-linejoin="round" text-anchor="end" textLength="61.5" lengthAdjust="spacingAndGlyphs">Mini-hotel</text>
<text x="502" y="329" font-size="14.5" fill="#5c7582" stroke="#fff" stroke-width="2.6" paint-order="stroke" stroke-linejoin="round" text-anchor="end" textLength="96" lengthAdjust="spacingAndGlyphs">Вантажне СТО</text>
<text x="502" y="343" font-size="14.5" fill="#5c7582" stroke="#fff" stroke-width="2.6" paint-order="stroke" stroke-linejoin="round" text-anchor="end" textLength="104" lengthAdjust="spacingAndGlyphs">та ТІР сервіс...</text>
<text x="500.75" y="354" font-size="11.5" fill="#5c7582" stroke="#fff" stroke-width="2.6" paint-order="stroke" stroke-linejoin="round" text-anchor="end" textLength="89" lengthAdjust="spacingAndGlyphs">Truck repair shop</text>
<path d="M478 389.3c-1.200-6-10-10.300-10-19.600a10 10 0 0 1 20 0c0 9.300-8.800 13.600-10 19.600z" fill="#78909c"/>
<circle cx="478" cy="370" r="3.200" fill="#fff"/>
<path d="M478 424.3c-1.200-6-10-10.300-10-19.600a10 10 0 0 1 20 0c0 9.300-8.800 13.600-10 19.600z" fill="#4285f4"/>
<path d="M473.5 403h9v7h-9z" fill="#fff"/><path d="M476 403v-1.500a2 2 0 0 1 4 0v1.500" stroke="#fff" stroke-width="1.200" fill="none"/>
<text x="464.5" y="413" font-size="11.5" fill="#1a73e8" stroke="#fff" stroke-width="2.6" paint-order="stroke" stroke-linejoin="round" text-anchor="end" textLength="70" lengthAdjust="spacingAndGlyphs">Clothing store</text>
<text x="561.5" y="415" font-size="14.8" fill="#5c7582" stroke="#fff" stroke-width="2.6" paint-order="stroke" stroke-linejoin="round" text-anchor="start" textLength="76.5" lengthAdjust="spacingAndGlyphs">Нова пошта</text>
<path d="M595 453.3c-1.200-6-10-10.300-10-19.600a10 10 0 0 1 20 0c0 9.300-8.800 13.600-10 19.600z" fill="#f29900"/>
<path d="M592 428v5M590.5 428v4h3v-4M592 432v8M598 428c-2 1-2 5 0 6v6" stroke="#fff" stroke-width="1.300" fill="none"/>
<text x="655" y="466" font-size="14.5" fill="#5c7582" stroke="#fff" stroke-width="2.6" paint-order="stroke" stroke-linejoin="round" text-anchor="start" font-weight="bold" textLength="96" lengthAdjust="spacingAndGlyphs">Нова пошта №</text>
<text x="507" y="502" font-size="14.8" fill="#5c7582" stroke="#fff" stroke-width="2.6" paint-order="stroke" stroke-linejoin="round" text-anchor="start" textLength="140" lengthAdjust="spacingAndGlyphs">Administrative Service</text>
<text x="558" y="520" font-size="14.8" fill="#5c7582" stroke="#fff" stroke-width="2.6" paint-order="stroke" stroke-linejoin="round" text-anchor="start">Center Uman...</text>
<path d="M668 524.8c-1.200-6-10-10.300-10-19.600a10 10 0 0 1 20 0c0 9.300-8.800 13.600-10 19.600z" fill="#78909c"/>
<path d="M663 503.5l5-3.500 5 3.500zM664 504.5v5M666.7 504.5v5M669.3 504.5v5M672 504.5v5M662.5 510.5h11" stroke="#fff" stroke-width="1.300" fill="#fff"/>
<text x="582" y="547" font-size="14.5" fill="#188038" stroke="#fff" stroke-width="2.6" paint-order="stroke" stroke-linejoin="round" text-anchor="end" textLength="108" lengthAdjust="spacingAndGlyphs">Pol&#39;s&#39;ke cemetery</text>
<text x="582.75" y="557.5" font-size="11.5" fill="#188038" stroke="#fff" stroke-width="2.6" paint-order="stroke" stroke-linejoin="round" text-anchor="end" textLength="110" lengthAdjust="spacingAndGlyphs">Польське кладовище</text>
<path d="M527 591.3c-1.200-6-10-10.300-10-19.600a10 10 0 0 1 20 0c0 9.300-8.800 13.600-10 19.600z" fill="#34a853"/>
<path d="M527 565.5l4 5h-2l3 4h-4v3.500h-2v-3.500h-4l3-4h-2z" fill="#fff"/>
<path d="M684.5 570.3c-1.200-6-10-10.300-10-19.600a10 10 0 0 1 20 0c0 9.300-8.800 13.600-10 19.600z" fill="#f29900"/>
<path d="M681.5 545v5M680.0 545v4h3v-4M681.5 549v8M687.5 545c-2 1-2 5 0 6v6" stroke="#fff" stroke-width="1.300" fill="none"/>
<text x="670.75" y="555.5" font-size="14.8" fill="#e37400" stroke="#fff" stroke-width="2.6" paint-order="stroke" stroke-linejoin="round" text-anchor="end" textLength="53" lengthAdjust="spacingAndGlyphs">Kamidzu</text>
<text x="670.75" y="567.5" font-size="11.5" fill="#e37400" stroke="#fff" stroke-width="2.6" paint-order="stroke" stroke-linejoin="round" text-anchor="end" textLength="40" lengthAdjust="spacingAndGlyphs">Камідзу</text>
<path d="M503.5 636.8c-1.200-6-10-10.300-10-19.600a10 10 0 0 1 20 0c0 9.300-8.800 13.600-10 19.600z" fill="#f29900"/>
<path d="M498.5 614.0h8v4a3 3 0 0 1-3 3h-2a3 3 0 0 1-3-3zM506.5 615.0h2v3h-2M498.5 622.5h9" fill="#fff" stroke="#fff" stroke-width=".8"/>
<text x="490.5" y="622" font-size="14.8" fill="#e37400" stroke="#fff" stroke-width="2.6" paint-order="stroke" stroke-linejoin="round" text-anchor="end" textLength="66" lengthAdjust="spacingAndGlyphs">na Kukhnya</text>
<text x="490.5" y="633.5" font-size="11.5" fill="#e37400" stroke="#fff" stroke-width="2.6" paint-order="stroke" stroke-linejoin="round" text-anchor="end" textLength="66" lengthAdjust="spacingAndGlyphs">в&#39;язька кухня</text>
<path d="M638.5 638.8c-1.200-6-10-10.300-10-19.600a10 10 0 0 1 20 0c0 9.300-8.800 13.600-10 19.600z" fill="#78909c"/>
<circle cx="638.5" cy="619.5" r="3.200" fill="#fff"/>
<text x="626.2" y="628.5" font-size="11.8" fill="#5c7582" stroke="#fff" stroke-width="2.6" paint-order="stroke" stroke-linejoin="round" text-anchor="end" textLength="54" lengthAdjust="spacingAndGlyphs">Dry cleaner</text>
<path d="M894 541.3c-1.200-6-10-10.300-10-19.600a10 10 0 0 1 20 0c0 9.300-8.800 13.600-10 19.600z" fill="#4285f4"/>
<path d="M888 517h2l2 7h6l2-5h-9" stroke="#fff" stroke-width="1.400" fill="none"/><circle cx="893" cy="526.5" r="1.200" fill="#fff"/><circle cx="897.5" cy="526.5" r="1.200" fill="#fff"/>
<text x="880" y="530" font-size="14.3" fill="#1a73e8" stroke="#fff" stroke-width="2.6" paint-order="stroke" stroke-linejoin="round" text-anchor="end" textLength="33" lengthAdjust="spacingAndGlyphs">Silpo</text>
<text x="880" y="530" font-size="14.3" fill="#1a73e8" stroke="#1a73e8" stroke-width=".3" text-anchor="end" textLength="33" lengthAdjust="spacingAndGlyphs">Silpo</text>
<text x="880" y="542.5" font-size="11.5" fill="#1a73e8" stroke="#fff" stroke-width="2.6" paint-order="stroke" stroke-linejoin="round" text-anchor="end" textLength="34" lengthAdjust="spacingAndGlyphs">Сільпо</text>
<path d="M927 543.3c-1.200-6-10-10.300-10-19.600a10 10 0 0 1 20 0c0 9.300-8.800 13.600-10 19.600z" fill="#f06292"/>
<path d="M921 520v8M921 526h12v-3h-7v3M933 523v5" stroke="#fff" stroke-width="1.500" fill="none"/><circle cx="923.5" cy="522" r="1.200" fill="#fff"/>
<text x="940" y="534" font-size="14.3" fill="#e91e63" stroke="#fff" stroke-width="2.6" paint-order="stroke" stroke-linejoin="round" text-anchor="start" textLength="113" lengthAdjust="spacingAndGlyphs">LOMO hotel uman</text>
<path d="M1003.5 510.3c-1.200-6-10-10.300-10-19.600a10 10 0 0 1 20 0c0 9.300-8.800 13.600-10 19.600z" fill="#78909c"/>
<circle cx="1003.5" cy="491" r="3.200" fill="#fff"/>
<text x="1016" y="489.5" font-size="13" fill="#5c7582" stroke="#fff" stroke-width="2.6" paint-order="stroke" stroke-linejoin="round" text-anchor="start" textLength="15" lengthAdjust="spacingAndGlyphs">47</text>
<text x="1017" y="501.5" font-size="11.5" fill="#5c7582" stroke="#fff" stroke-width="2.6" paint-order="stroke" stroke-linejoin="round" text-anchor="start" textLength="58" lengthAdjust="spacingAndGlyphs">Уманський</text>
<text x="1017" y="514.5" font-size="11.5" fill="#5c7582" stroke="#fff" stroke-width="2.6" paint-order="stroke" stroke-linejoin="round" text-anchor="start" textLength="102" lengthAdjust="spacingAndGlyphs">Пологовий Будинок</text>
<text x="1241.8" y="512" font-size="14" fill="#188038" stroke="#fff" stroke-width="2.6" paint-order="stroke" stroke-linejoin="round" text-anchor="end" font-weight="bold" textLength="78" lengthAdjust="spacingAndGlyphs">Fentezi-Park</text>
<text x="1241.8" y="527" font-size="14" fill="#188038" stroke="#fff" stroke-width="2.6" paint-order="stroke" stroke-linejoin="round" text-anchor="end" font-weight="bold" textLength="101.3" lengthAdjust="spacingAndGlyphs">"Nova Sofiyivka"</text>
<text x="1241.8" y="538" font-size="11.5" fill="#188038" stroke="#fff" stroke-width="2.6" paint-order="stroke" stroke-linejoin="round" text-anchor="end" textLength="66" lengthAdjust="spacingAndGlyphs">Фентезі-парк</text>
<text x="1241.8" y="550" font-size="11.5" fill="#188038" stroke="#fff" stroke-width="2.6" paint-order="stroke" stroke-linejoin="round" text-anchor="end" textLength="80" lengthAdjust="spacingAndGlyphs">"Нова Софіївка"</text>
<path d="M1254.5 539.8c-1.200-6-10-10.300-10-19.600a10 10 0 0 1 20 0c0 9.300-8.800 13.600-10 19.600z" fill="#34a853"/>
<path d="M1254.5 514.0l4 5h-2l3 4h-4v3.500h-2v-3.500h-4l3-4h-2z" fill="#fff"/>
<path d="M1280 677.8c-1.200-6-10-10.300-10-19.600a10 10 0 0 1 20 0c0 9.300-8.800 13.600-10 19.600z" fill="#34a853"/>
<path d="M1280 652.0l4 5h-2l3 4h-4v3.500h-2v-3.500h-4l3-4h-2z" fill="#fff"/>
<text x="1267.5" y="669" font-size="11.8" fill="#188038" stroke="#fff" stroke-width="2.6" paint-order="stroke" stroke-linejoin="round" text-anchor="end" textLength="73.5" lengthAdjust="spacingAndGlyphs">DINO SOFIA</text>
<path d="M1172 729.3c-1.200-6-10-10.300-10-19.600a10 10 0 0 1 20 0c0 9.300-8.800 13.600-10 19.600z" fill="#f06292"/>
<path d="M1166 706v8M1166 712h12v-3h-7v3M1178 709v5" stroke="#fff" stroke-width="1.500" fill="none"/><circle cx="1168.5" cy="708" r="1.200" fill="#fff"/>
<text x="1159" y="721" font-size="14.3" fill="#e91e63" stroke="#fff" stroke-width="2.6" paint-order="stroke" stroke-linejoin="round" text-anchor="end" textLength="47" lengthAdjust="spacingAndGlyphs">Hoshen</text>
<path d="M1087.5 660.3c-1.200-6-10-10.300-10-19.600a10 10 0 0 1 20 0c0 9.300-8.800 13.600-10 19.600z" fill="#f29900"/>
<path d="M1084.5 635v5M1083.0 635v4h3v-4M1084.5 639v8M1090.5 635c-2 1-2 5 0 6v6" stroke="#fff" stroke-width="1.300" fill="none"/>
<text x="1047" y="653" font-size="14.3" fill="#e37400" stroke="#fff" stroke-width="2.6" paint-order="stroke" stroke-linejoin="round" text-anchor="start" textLength="27" lengthAdjust="spacingAndGlyphs">Chef</text>
<path d="M1001 692.3c-1.200-6-10-10.300-10-19.600a10 10 0 0 1 20 0c0 9.300-8.800 13.600-10 19.600z" fill="#f29900"/>
<path d="M998 667v5M996.5 667v4h3v-4M998 671v8M1004 667c-2 1-2 5 0 6v6" stroke="#fff" stroke-width="1.300" fill="none"/>
<text x="866" y="673.5" font-size="14.8" fill="#e37400" stroke="#fff" stroke-width="2.6" paint-order="stroke" stroke-linejoin="round" text-anchor="start" textLength="118" lengthAdjust="spacingAndGlyphs">Restoran Skovoroda</text>
<text x="918.75" y="685" font-size="11.5" fill="#e37400" stroke="#fff" stroke-width="2.6" paint-order="stroke" stroke-linejoin="round" text-anchor="start">Паб-ресторан</text>
<text x="925" y="697" font-size="11.5" fill="#e37400" stroke="#fff" stroke-width="2.6" paint-order="stroke" stroke-linejoin="round" text-anchor="start">Сковорода</text>
<path d="M793.5 637.3c-1.200-6-10-10.300-10-19.600a10 10 0 0 1 20 0c0 9.300-8.800 13.600-10 19.600z" fill="#4285f4"/>
<path d="M789.0 616h9v7h-9z" fill="#fff"/><path d="M791.5 616v-1.500a2 2 0 0 1 4 0v1.500" stroke="#fff" stroke-width="1.200" fill="none"/>
<text x="780" y="624" font-size="14.3" fill="#1a73e8" stroke="#fff" stroke-width="2.6" paint-order="stroke" stroke-linejoin="round" text-anchor="end" textLength="33" lengthAdjust="spacingAndGlyphs">Plaza</text>
<text x="780" y="624" font-size="14.3" fill="#1a73e8" stroke="#1a73e8" stroke-width=".3" text-anchor="end" textLength="33" lengthAdjust="spacingAndGlyphs">Plaza</text>
<text x="780" y="636" font-size="11.5" fill="#1a73e8" stroke="#fff" stroke-width="2.6" paint-order="stroke" stroke-linejoin="round" text-anchor="end" textLength="30.5" lengthAdjust="spacingAndGlyphs">Плаза</text>
<text x="786" y="676" font-size="14.8" fill="#e37400" stroke="#fff" stroke-width="2.6" paint-order="stroke" stroke-linejoin="round" text-anchor="end" textLength="124" lengthAdjust="spacingAndGlyphs">Fitness club "Olimp"</text>
<text x="765" y="688" font-size="11.5" fill="#e37400" stroke="#fff" stroke-width="2.6" paint-order="stroke" stroke-linejoin="round" text-anchor="end" textLength="104" lengthAdjust="spacingAndGlyphs">Фітнес-клуб "Олімп"</text>
<path d="M682.5 721.8c-1.200-6-10-10.300-10-19.600a10 10 0 0 1 20 0c0 9.300-8.800 13.600-10 19.600z" fill="#f29900"/>
<path d="M678.0 697.5h9l-4.500 5.500zM682.5 702.5v5M679.5 708.0h6" stroke="#fff" stroke-width="1.200" fill="#fff"/>
<path d="M836 597.3c-1.200-6-10-10.300-10-19.600a10 10 0 0 1 20 0c0 9.300-8.800 13.600-10 19.600z" fill="#f29900"/>
<path d="M833 572v5M831.5 572v4h3v-4M833 576v8M839 572c-2 1-2 5 0 6v6" stroke="#fff" stroke-width="1.300" fill="none"/>
<rect x="873" y="718" width="32" height="32" fill="#ffa800"/><path d="M889 725L878 743.5H900z" fill="#0a3780"/>
<rect x="818.5" y="715.6" width="32" height="32" fill="#ffa800"/><path d="M834.5 722.6L823.5 741.1H845.5z" fill="#0a3780"/>
<rect x="939.6" y="700.6" width="32" height="32" fill="#ffa800"/><path d="M955.6 707.6L944.6 726.1H966.6z" fill="#0a3780"/>
<rect x="920.5" y="696" width="32" height="32" fill="#ffa800"/><path d="M936.5 703L925.5 721.5H947.5z" fill="#0a3780"/>
<rect x="752" y="685" width="32" height="32" fill="#ffa800"/><path d="M768 692L757 710.5H779z" fill="#0a3780"/>
<rect x="839.75" y="685" width="32" height="32" fill="#ffa800"/><path d="M855.75 692L844.75 710.5H866.75z" fill="#0a3780"/>
<rect x="707" y="675" width="32" height="32" fill="#ffa800"/><path d="M723 682L712 700.5H734z" fill="#0a3780"/>
<rect x="1093" y="670" width="32" height="32" fill="#ffa800"/><path d="M1109 677L1098 695.5H1120z" fill="#0a3780"/>
<rect x="977" y="668.5" width="32" height="32" fill="#ffa800"/><path d="M993 675.5L982 694H1004z" fill="#0a3780"/>
<rect x="973" y="659.5" width="32" height="32" fill="#ffa800"/><path d="M989 666.5L978 685H1000z" fill="#0a3780"/>
<rect x="835.5" y="653" width="32" height="32" fill="#ffa800"/><path d="M851.5 660L840.5 678.5H862.5z" fill="#0a3780"/>
<rect x="661" y="651" width="32" height="32" fill="#ffa800"/><path d="M677 658L666 676.5H688z" fill="#0a3780"/>
<rect x="745.5" y="643" width="32" height="32" fill="#ffa800"/><path d="M761.5 650L750.5 668.5H772.5z" fill="#0a3780"/>
<rect x="968" y="643" width="32" height="32" fill="#ffa800"/><path d="M984 650L973 668.5H995z" fill="#0a3780"/>
<rect x="1015" y="638" width="32" height="32" fill="#ffa800"/><path d="M1031 645L1020 663.5H1042z" fill="#0a3780"/>
<rect x="1097" y="635" width="32" height="32" fill="#ffa800"/><path d="M1113 642L1102 660.5H1124z" fill="#0a3780"/>
<rect x="800.5" y="634" width="32" height="32" fill="#ffa800"/><path d="M816.5 641L805.5 659.5H827.5z" fill="#0a3780"/>
<rect x="985" y="617" width="32" height="32" fill="#ffa800"/><path d="M1001 624L990 642.5H1012z" fill="#0a3780"/>
<rect x="1084" y="617" width="32" height="32" fill="#ffa800"/><path d="M1100 624L1089 642.5H1111z" fill="#0a3780"/>
<rect x="1118" y="616" width="32" height="32" fill="#ffa800"/><path d="M1134 623L1123 641.5H1145z" fill="#0a3780"/>
<rect x="1334.6" y="614.3" width="32" height="32" fill="#ffa800"/><path d="M1350.6 621.3L1339.6 639.8H1361.6z" fill="#0a3780"/>
<rect x="965" y="602" width="32" height="32" fill="#ffa800"/><path d="M981 609L970 627.5H992z" fill="#0a3780"/>
<rect x="1088" y="600" width="32" height="32" fill="#ffa800"/><path d="M1104 607L1093 625.5H1115z" fill="#0a3780"/>
<rect x="1158" y="597" width="32" height="32" fill="#ffa800"/><path d="M1174 604L1163 622.5H1185z" fill="#0a3780"/>
<rect x="708.5" y="584.5" width="32" height="32" fill="#ffa800"/><path d="M724.5 591.5L713.5 610H735.5z" fill="#0a3780"/>
<rect x="738.5" y="582" width="32" height="32" fill="#ffa800"/><path d="M754.5 589L743.5 607.5H765.5z" fill="#0a3780"/>
<rect x="1151" y="579" width="32" height="32" fill="#ffa800"/><path d="M1167 586L1156 604.5H1178z" fill="#0a3780"/>
<rect x="998" y="573" width="32" height="32" fill="#ffa800"/><path d="M1014 580L1003 598.5H1025z" fill="#0a3780"/>
<rect x="812.5" y="560.5" width="32" height="32" fill="#ffa800"/><path d="M828.5 567.5L817.5 586H839.5z" fill="#0a3780"/>
<rect x="750" y="559.5" width="32" height="32" fill="#ffa800"/><path d="M766 566.5L755 585H777z" fill="#0a3780"/>
<rect x="767" y="554.5" width="32" height="32" fill="#ffa800"/><path d="M783 561.5L772 580H794z" fill="#0a3780"/>
<rect x="826" y="553" width="32" height="32" fill="#ffa800"/><path d="M842 560L831 578.5H853z" fill="#0a3780"/>
<rect x="925" y="548" width="32" height="32" fill="#ffa800"/><path d="M941 555L930 573.5H952z" fill="#0a3780"/>
<rect x="809" y="548" width="32" height="32" fill="#ffa800"/><path d="M825 555L814 573.5H836z" fill="#0a3780"/>
<rect x="750" y="542" width="32" height="32" fill="#ffa800"/><path d="M766 549L755 567.5H777z" fill="#0a3780"/>
<rect x="1009.5" y="537" width="32" height="32" fill="#ffa800"/><path d="M1025.5 544L1014.5 562.5H1036.5z" fill="#0a3780"/>
<rect x="1359" y="528" width="32" height="32" fill="#ffa800"/><path d="M1375 535L1364 553.5H1386z" fill="#0a3780"/>
<rect x="788" y="520.5" width="32" height="32" fill="#ffa800"/><path d="M804 527.5L793 546H815z" fill="#0a3780"/>
<rect x="883" y="520.5" width="32" height="32" fill="#ffa800"/><path d="M899 527.5L888 546H910z" fill="#0a3780"/>
<rect x="740" y="513" width="32" height="32" fill="#ffa800"/><path d="M756 520L745 538.5H767z" fill="#0a3780"/>
<rect x="635.5" y="512" width="32" height="32" fill="#ffa800"/><path d="M651.5 519L640.5 537.5H662.5z" fill="#0a3780"/>
<rect x="627.5" y="500.5" width="32" height="32" fill="#ffa800"/><path d="M643.5 507.5L632.5 526H654.5z" fill="#0a3780"/>
<rect x="795.5" y="498" width="32" height="32" fill="#ffa800"/><path d="M811.5 505L800.5 523.5H822.5z" fill="#0a3780"/>
<rect x="852" y="498" width="32" height="32" fill="#ffa800"/><path d="M868 505L857 523.5H879z" fill="#0a3780"/>
<rect x="587" y="495" width="32" height="32" fill="#ffa800"/><path d="M603 502L592 520.5H614z" fill="#0a3780"/>
<rect x="728" y="488" width="32" height="32" fill="#ffa800"/><path d="M744 495L733 513.5H755z" fill="#0a3780"/>
<rect x="812" y="475" width="32" height="32" fill="#ffa800"/><path d="M828 482L817 500.5H839z" fill="#0a3780"/>
<rect x="635.5" y="471" width="32" height="32" fill="#ffa800"/><path d="M651.5 478L640.5 496.5H662.5z" fill="#0a3780"/>
<rect x="575" y="464" width="32" height="32" fill="#ffa800"/><path d="M591 471L580 489.5H602z" fill="#0a3780"/>
<rect x="953" y="462" width="32" height="32" fill="#ffa800"/><path d="M969 469L958 487.5H980z" fill="#0a3780"/>
<rect x="757" y="461" width="32" height="32" fill="#ffa800"/><path d="M773 468L762 486.5H784z" fill="#0a3780"/>
<rect x="752" y="447.5" width="32" height="32" fill="#ffa800"/><path d="M768 454.5L757 473H779z" fill="#0a3780"/>
<rect x="780.5" y="447.5" width="32" height="32" fill="#ffa800"/><path d="M796.5 454.5L785.5 473H807.5z" fill="#0a3780"/>
<rect x="709.5" y="437" width="32" height="32" fill="#ffa800"/><path d="M725.5 444L714.5 462.5H736.5z" fill="#0a3780"/>
<rect x="774.5" y="425" width="32" height="32" fill="#ffa800"/><path d="M790.5 432L779.5 450.5H801.5z" fill="#0a3780"/>
<rect x="839.5" y="418.5" width="32" height="32" fill="#ffa800"/><path d="M855.5 425.5L844.5 444H866.5z" fill="#0a3780"/>
<rect x="766" y="417" width="32" height="32" fill="#ffa800"/><path d="M782 424L771 442.5H793z" fill="#0a3780"/>
<rect x="734.5" y="414.5" width="32" height="32" fill="#ffa800"/><path d="M750.5 421.5L739.5 440H761.5z" fill="#0a3780"/>
<rect x="641.5" y="402.5" width="32" height="32" fill="#ffa800"/><path d="M657.5 409.5L646.5 428H668.5z" fill="#0a3780"/>
<rect x="664" y="397.5" width="32" height="32" fill="#ffa800"/><path d="M680 404.5L669 423H691z" fill="#0a3780"/>
<rect x="891.5" y="391" width="32" height="32" fill="#ffa800"/><path d="M907.5 398L896.5 416.5H918.5z" fill="#0a3780"/>
<rect x="648" y="378" width="32" height="32" fill="#ffa800"/><path d="M664 385L653 403.5H675z" fill="#0a3780"/>
<rect x="581.5" y="366" width="32" height="32" fill="#ffa800"/><path d="M597.5 373L586.5 391.5H608.5z" fill="#0a3780"/>
<rect x="791" y="360" width="32" height="32" fill="#ffa800"/><path d="M807 367L796 385.5H818z" fill="#0a3780"/>
<rect x="821" y="358" width="32" height="32" fill="#ffa800"/><path d="M837 365L826 383.5H848z" fill="#0a3780"/>
<rect x="645.5" y="353" width="32" height="32" fill="#ffa800"/><path d="M661.5 360L650.5 378.5H672.5z" fill="#0a3780"/>
<rect x="538" y="346" width="32" height="32" fill="#ffa800"/><path d="M554 353L543 371.5H565z" fill="#0a3780"/>
<rect x="724.5" y="342" width="32" height="32" fill="#ffa800"/><path d="M740.5 349L729.5 367.5H751.5z" fill="#0a3780"/>
<rect x="549" y="319" width="32" height="32" fill="#ffa800"/><path d="M565 326L554 344.5H576z" fill="#0a3780"/>
<rect x="585" y="302" width="32" height="32" fill="#ffa800"/><path d="M601 309L590 327.5H612z" fill="#0a3780"/>
<rect x="719.5" y="290" width="32" height="32" fill="#ffa800"/><path d="M735.5 297L724.5 315.5H746.5z" fill="#0a3780"/>
<rect x="741.5" y="166" width="32" height="32" fill="#ffa800"/><path d="M757.5 173L746.5 191.5H768.5z" fill="#0a3780"/>
<rect x="1102" y="131" width="32" height="32" fill="#ffa800"/><path d="M1118 138L1107 156.5H1129z" fill="#0a3780"/>
<rect x="700" y="128" width="32" height="32" fill="#ffa800"/><path d="M716 135L705 153.5H727z" fill="#0a3780"/>
<rect x="733" y="45.8" width="32" height="32" fill="#ffa800"/><path d="M749 52.8L738 71.3H760z" fill="#0a3780"/>
<rect x="855.4" y="700.7" width="32" height="32" fill="#ffa800"/><path d="M871.4 707.7L860.4 726.2H882.4z" fill="#0a3780"/>
<rect x="798.5" y="646" width="32" height="32" fill="#ffa800"/><path d="M814.5 653L803.5 671.5H825.5z" fill="#0a3780"/>
<rect x="1352" y="615.4" width="32" height="32" fill="#ffa800"/><path d="M1368 622.4L1357 640.9H1379z" fill="#0a3780"/>
<rect x="703.5" y="598" width="32" height="32" fill="#ffa800"/><path d="M719.5 605L708.5 623.5H730.5z" fill="#0a3780"/>
<rect x="891.5" y="533.5" width="32" height="32" fill="#ffa800"/><path d="M907.5 540.5L896.5 559H918.5z" fill="#0a3780"/>
<rect x="857" y="430.5" width="32" height="32" fill="#ffa800"/><path d="M873 437.5L862 456H884z" fill="#0a3780"/>
<rect x="675" y="153" width="32" height="32" fill="#ffa800"/><path d="M691 160L680 178.5H702z" fill="#0a3780"/>
<text x="751" y="88.1" font-size="11.300" fill="#1b1b1b" stroke="#fff" stroke-width="2.400" paint-order="stroke" stroke-linejoin="round" text-anchor="middle" textLength="132.500" lengthAdjust="spacingAndGlyphs">Протирадіаційне укритт...</text>
<text x="718" y="170.3" font-size="11.300" fill="#1b1b1b" stroke="#fff" stroke-width="2.400" paint-order="stroke" stroke-linejoin="round" text-anchor="middle" textLength="133" lengthAdjust="spacingAndGlyphs">Найпростіше укриття (м...</text>
<text x="759.5" y="208.3" font-size="11.300" fill="#1b1b1b" stroke="#fff" stroke-width="2.400" paint-order="stroke" stroke-linejoin="round" text-anchor="middle" textLength="133" lengthAdjust="spacingAndGlyphs">Найпростіше укриття (м...</text>
<text x="1120" y="173.3" font-size="11.300" fill="#1b1b1b" stroke="#fff" stroke-width="2.400" paint-order="stroke" stroke-linejoin="round" text-anchor="middle" textLength="132.500" lengthAdjust="spacingAndGlyphs">Продирадіаційне укритт...</text>
<text x="737.5" y="332.3" font-size="11.300" fill="#1b1b1b" stroke="#fff" stroke-width="2.400" paint-order="stroke" stroke-linejoin="round" text-anchor="middle" textLength="132.500" lengthAdjust="spacingAndGlyphs">Протирадіаційне укритт...</text>
<text x="567" y="361.3" font-size="11.300" fill="#1b1b1b" stroke="#fff" stroke-width="2.400" paint-order="stroke" stroke-linejoin="round" text-anchor="middle" textLength="132.500" lengthAdjust="spacingAndGlyphs">Протирадіаційне укритт...</text>
<text x="742.5" y="384.3" font-size="11.300" fill="#1b1b1b" stroke="#fff" stroke-width="2.400" paint-order="stroke" stroke-linejoin="round" text-anchor="middle" textLength="133" lengthAdjust="spacingAndGlyphs">Найпростіше укриття (м...</text>
<text x="666" y="420.3" font-size="11.300" fill="#1b1b1b" stroke="#fff" stroke-width="2.400" paint-order="stroke" stroke-linejoin="round" text-anchor="middle" textLength="132.500" lengthAdjust="spacingAndGlyphs">Протирадіаційне укритт...</text>
<text x="662" y="446" font-size="11.300" fill="#1b1b1b" stroke="#fff" stroke-width="2.400" paint-order="stroke" stroke-linejoin="round" text-anchor="middle" textLength="132.500" lengthAdjust="spacingAndGlyphs">Протирадіаційне укритт...</text>
<text x="909.5" y="433.3" font-size="11.300" fill="#1b1b1b" stroke="#fff" stroke-width="2.400" paint-order="stroke" stroke-linejoin="round" text-anchor="middle" textLength="129" lengthAdjust="spacingAndGlyphs">Протирадіаційне  укрит...</text>
<text x="727.5" y="479.3" font-size="11.300" fill="#1b1b1b" stroke="#fff" stroke-width="2.400" paint-order="stroke" stroke-linejoin="round" text-anchor="middle" textLength="133" lengthAdjust="spacingAndGlyphs">Найпростіше укриття (м...</text>
<text x="775" y="503.3" font-size="11.300" fill="#1b1b1b" stroke="#fff" stroke-width="2.400" paint-order="stroke" stroke-linejoin="round" text-anchor="middle" textLength="132.500" lengthAdjust="spacingAndGlyphs">Протирадіаційне укритт...</text>
<text x="758" y="555.3" font-size="11.300" fill="#1b1b1b" stroke="#fff" stroke-width="2.400" paint-order="stroke" stroke-linejoin="round" text-anchor="middle" textLength="132.500" lengthAdjust="spacingAndGlyphs">Протирадіаційне укритт...</text>
<text x="909.5" y="575.8" font-size="11.300" fill="#1b1b1b" stroke="#fff" stroke-width="2.400" paint-order="stroke" stroke-linejoin="round" text-anchor="middle" textLength="133" lengthAdjust="spacingAndGlyphs">Найпростіше укриття (м...</text>
<text x="971" y="504.3" font-size="11.300" fill="#1b1b1b" stroke="#fff" stroke-width="2.400" paint-order="stroke" stroke-linejoin="round" text-anchor="middle" textLength="132.500" lengthAdjust="spacingAndGlyphs">Протирадіаційне укритт...</text>
<text x="1016" y="615.3" font-size="11.300" fill="#1b1b1b" stroke="#fff" stroke-width="2.400" paint-order="stroke" stroke-linejoin="round" text-anchor="middle" textLength="133" lengthAdjust="spacingAndGlyphs">Найпростіше укриття (м...</text>
<text x="593" y="506.3" font-size="11.300" fill="#1b1b1b" stroke="#fff" stroke-width="2.400" paint-order="stroke" stroke-linejoin="round" text-anchor="middle" textLength="132.500" lengthAdjust="spacingAndGlyphs">Протирадіаційне укритт...</text>
<text x="756.5" y="624.3" font-size="11.300" fill="#1b1b1b" stroke="#fff" stroke-width="2.400" paint-order="stroke" stroke-linejoin="round" text-anchor="middle" textLength="132.500" lengthAdjust="spacingAndGlyphs">Протирадіаційне укритт...</text>
<text x="818.5" y="676.3" font-size="11.300" fill="#1b1b1b" stroke="#fff" stroke-width="2.400" paint-order="stroke" stroke-linejoin="round" text-anchor="middle" textLength="133" lengthAdjust="spacingAndGlyphs">Найпростіше укриття (м...</text>
<text x="853.5" y="695.3" font-size="11.300" fill="#1b1b1b" stroke="#fff" stroke-width="2.400" paint-order="stroke" stroke-linejoin="round" text-anchor="middle" textLength="132.500" lengthAdjust="spacingAndGlyphs">Протирадіаційне укритт...</text>
<text x="679" y="693.3" font-size="11.300" fill="#1b1b1b" stroke="#fff" stroke-width="2.400" paint-order="stroke" stroke-linejoin="round" text-anchor="middle" textLength="133" lengthAdjust="spacingAndGlyphs">Найпростіше укриття (м...</text>
<text x="770" y="727.3" font-size="11.300" fill="#1b1b1b" stroke="#fff" stroke-width="2.400" paint-order="stroke" stroke-linejoin="round" text-anchor="middle" textLength="132.500" lengthAdjust="spacingAndGlyphs">Протирадіаційне укритт...</text>
<text x="1136" y="658.3" font-size="11.300" fill="#1b1b1b" stroke="#fff" stroke-width="2.400" paint-order="stroke" stroke-linejoin="round" text-anchor="middle" textLength="132.500" lengthAdjust="spacingAndGlyphs">Протирадіаційне укритт...</text>
<text x="1115" y="677.3" font-size="11.300" fill="#1b1b1b" stroke="#fff" stroke-width="2.400" paint-order="stroke" stroke-linejoin="round" text-anchor="middle" textLength="133" lengthAdjust="spacingAndGlyphs">Найпростіше укриття (м...</text>
<text x="1111" y="712.3" font-size="11.300" fill="#1b1b1b" stroke="#fff" stroke-width="2.400" paint-order="stroke" stroke-linejoin="round" text-anchor="middle" textLength="132.500" lengthAdjust="spacingAndGlyphs">Протирадіаційне укритя...</text>
<text x="1377" y="570.3" font-size="11.300" fill="#1b1b1b" stroke="#fff" stroke-width="2.400" paint-order="stroke" stroke-linejoin="round" text-anchor="middle" textLength="132.500" lengthAdjust="spacingAndGlyphs">Протирадіаційне укритт...</text>
<text x="1352.6" y="656.6" font-size="11.300" fill="#1b1b1b" stroke="#fff" stroke-width="2.400" paint-order="stroke" stroke-linejoin="round" text-anchor="middle" textLength="132.500" lengthAdjust="spacingAndGlyphs">Протирадіаційне укритт...</text>
</svg>
<div class="abs" style="left:-1px;top:0;width:935px;height:652px">
<div class="abs" style="left:14px;top:16.700px;width:352px;height:30.800px;background:#f2f2f2;border:1px solid #7a7a7a"></div>
<svg class="abs" style="left:22px;top:25px" width="14" height="14" viewBox="0 0 14 14"><circle cx="7" cy="7" r="6" fill="#4d90fe"/><path d="M7 3.200v1.600M7 6v4.800" stroke="#fff" stroke-width="1.700"/></svg>
<div class="abs" style="left:38.500px;top:25.500px;font-size:10.800px;color:#000;white-space:nowrap;-webkit-text-stroke:.25px #000;letter-spacing:.05px">This map was created by a user. <span style="color:#4d80f0;-webkit-text-stroke:.25px #4d80f0">Learn how to create your own.</span></div>
<svg class="abs" style="left:350px;top:23px" width="9" height="9" viewBox="0 0 9 9"><path d="M1.200 1.200l6.600 6.600M7.800 1.200L1.200 7.800" stroke="#222" stroke-width="1.200"/></svg>
<!-- apps grid + avatar -->
<svg class="abs" style="left:836px;top:23px" width="17" height="17" viewBox="0 0 17 17" fill="#5f6368"><rect x="0" y="0" width="4" height="4"/><rect x="6.500" y="0" width="4" height="4"/><rect x="13" y="0" width="4" height="4"/><rect x="0" y="6.500" width="4" height="4"/><rect x="6.500" y="6.500" width="4" height="4"/><rect x="13" y="6.500" width="4" height="4"/><rect x="0" y="13" width="4" height="4"/><rect x="6.500" y="13" width="4" height="4"/><rect x="13" y="13" width="4" height="4"/></svg>
<div class="abs" style="left:873px;top:15px;width:32px;height:32px;border-radius:16px;background:#f3efee;overflow:hidden">
 <div class="abs" style="left:8px;top:4px;width:16px;height:15px;border-radius:8px;background:#2a2321"></div>
 <div class="abs" style="left:11px;top:8px;width:10px;height:12px;border-radius:5px;background:#d9a892"></div>
 <div class="abs" style="left:4px;top:21px;width:24px;height:14px;border-radius:9px 9px 0 0;background:#26262b"></div>
</div>
<!-- zoom -->
<div class="abs" style="left:16px;top:569px;width:29px;height:59px;background:#fff;border-radius:2px;box-shadow:0 1px 4px rgba(0,0,0,.3)"></div>
<div class="abs" style="left:19px;top:598px;width:23px;height:1px;background:#e6e6e6"></div>
<svg class="abs" style="left:24px;top:577px" width="13" height="13" viewBox="0 0 13 13"><path d="M6.500 1v11M1 6.500h11" stroke="#8c8c8c" stroke-width="2.200"/></svg>
<svg class="abs" style="left:24px;top:607px" width="13" height="13" viewBox="0 0 13 13"><path d="M1 6.500h11" stroke="#8c8c8c" stroke-width="2.200"/></svg>
<!-- bottom attribution -->
<div class="abs" style="left:0;top:636px;width:297px;height:16px;background:rgba(255,255,255,.72)"></div>
<div class="abs" style="left:8px;top:636.500px;font-size:11.900px;color:#6e6e6e;white-space:nowrap">Map data ©2023 Google</div>
<div class="abs" style="left:151px;top:636.500px;font-size:12.300px;color:#4d80f0;white-space:nowrap">Terms</div>
<div class="abs" style="left:197px;top:636.500px;font-size:12.100px;color:#6e6e6e;white-space:nowrap">200 m</div>
<div class="abs" style="left:235px;top:643px;width:62px;height:6px;border:1px solid #6e6e6e;border-top:none"></div>
<div class="abs" style="left:838px;top:638px;width:97px;height:14px;background:rgba(245,245,245,.8)"></div>
<div class="abs" style="left:842.500px;top:638.500px;font-size:10.200px;color:#222;white-space:nowrap;letter-spacing:-.1px">Keyboard shortcuts</div>
<!-- google my maps logo -->
<svg class="abs" style="left:395px;top:604px" width="145" height="34" viewBox="0 0 145 34" font-family="Liberation Sans, sans-serif">
<g stroke="#fff" stroke-width="3" stroke-opacity=".7" paint-order="stroke" font-size="23">
<text x="3" y="24" fill="#4285f4" textLength="16" lengthAdjust="spacingAndGlyphs" font-weight="bold">G</text>
<text x="19.500" y="24" fill="#ea4335">o</text><text x="31" y="24" fill="#fbbc05">o</text><text x="42.500" y="24" fill="#4285f4">g</text><text x="54" y="24" fill="#34a853">l</text><text x="58" y="24" fill="#ea4335">e</text>
<text x="71.500" y="23" fill="#6b6b6b" fill-opacity=".85" font-size="17.500" textLength="69" lengthAdjust="spacingAndGlyphs">My Maps</text></g></svg>
<!-- windows activation watermark -->
<div class="abs" style="left:601px;top:554px;font-size:20.300px;color:rgba(150,150,150,.62);white-space:nowrap;letter-spacing:-.2px">Активація Windows</div>
<div class="abs" style="left:601px;top:582px;font-size:15.050px;color:rgba(150,150,150,.62);white-space:nowrap">Перейдіть до розділу "Настройки", щоб</div>
<div class="abs" style="left:601px;top:603px;font-size:14.900px;color:rgba(150,150,150,.62);white-space:nowrap">активувати Windows.</div>
</div>
<!--MAP-END-->
</div>
<!-- ================= TASKBAR ================= -->
<div id="task">
<!--TASK-START-->
  <!-- start -->
  <svg class="abs" style="left:15.500px;top:12px" width="16.500" height="16.500" viewBox="0 0 17 17"><path d="M0 2.400L6.900 1.400V8H0zM7.700 1.300L17 0v8H7.700zM0 8.800h6.900v6.600L0 14.400zM7.700 8.800H17V17l-9.300-1.300z" fill="#fff"/></svg>
  <!-- search -->
  <svg class="abs" style="left:59px;top:8.500px" width="24" height="24" viewBox="0 0 24 24"><circle cx="14.600" cy="9.600" r="7.400" stroke="#fff" stroke-width="2" fill="none"/><path d="M9.500 14.800L2.600 21.800" stroke="#fff" stroke-width="2.500"/></svg>
  <!-- task view -->
  <svg class="abs" style="left:111.500px;top:12px" width="17" height="16" viewBox="0 0 17 16"><rect x=".9" y="5.100" width="9.700" height="5.800" fill="none" stroke="#fff" stroke-width="1.300"/><path d="M.9 .3v2.300h9.700V.3M.9 15.700v-2.300h9.700v2.300" stroke="#fff" stroke-width="1.300" fill="none"/><path d="M15 .3v15.400" stroke="#fff" stroke-width="1.300"/><rect x="13.600" y="4.600" width="2.900" height="2.800" fill="#fff"/></svg>
  <!-- explorer -->
  <svg class="abs" style="left:159px;top:10px" width="24" height="20" viewBox="0 0 24 20"><path d="M1 1h8l1.500 2H1z" fill="#e9a519"/><path d="M1 2.800h21.500v16H1z" fill="#fcd767"/><path d="M1 2.800h21.500v1.200H1z" fill="#f2c24a"/><path d="M5.500 11.500h13v7.500h-13z" fill="#3f94de"/><path d="M5.500 11.500h13v1.300h-13z" fill="#2f7fcb"/><path d="M9 14.500h6v4.500H9z" fill="#fcd767"/></svg>
  <!-- edge -->
  <svg class="abs" style="left:208px;top:8px" width="24" height="24" viewBox="0 0 24 24"><defs><linearGradient id="eg1" x1="0" y1="0" x2="1" y2=".35"><stop offset="0" stop-color="#2aa7e6"/><stop offset=".55" stop-color="#34c5c0"/><stop offset="1" stop-color="#63e06a"/></linearGradient><linearGradient id="eg2" x1="0" y1="0" x2="1" y2="1"><stop offset="0" stop-color="#1b86dc"/><stop offset="1" stop-color="#0f5fb8"/></linearGradient></defs><circle cx="12" cy="12" r="11.700" fill="url(#eg1)"/><path d="M.3 12c0-3.500 2.200-6.500 6-7.500C4 7.500 4 12 7 15c3 3 8 3.300 12 1.300 2.500-1.300 4-3 4.700-4.300 0 6.500-5.200 11.700-11.700 11.700S.3 18.500.3 12z" fill="url(#eg2)"/><path d="M7.500 9.500C6.500 15 10 20 16.500 20c2.300 0 4.200-.7 5.500-1.800-2 3.300-5.700 5.500-10 5.500C7 23.700 3.300 20 3.300 15.500c0-2.700 1.700-5 4.200-6z" fill="#0b4f9c"/><path d="M12.300 12.800c0-2.200 1.700-3.800 3.800-3.800 2.600 0 4.700 1.700 4.700 3.900 0 1.500-1 2.500-2.600 2.500h-4.200c-1.100 0-1.700-1-1.700-2.600z" fill="#243040"/><path d="M12.300 12.800c0-2.200 1.700-3.800 3.800-3.800-1.500.8-2.200 2.200-2.200 3.800 0 1 .3 1.900 1 2.600h-.9c-1.100 0-1.700-1-1.700-2.600z" fill="#0b4f9c"/></svg>
  <!-- chrome -->
  <svg class="abs" style="left:257px;top:8px" width="24" height="24" viewBox="0 0 24 24"><circle cx="12" cy="12" r="11.500" fill="#fbc116"/><path d="M12 .5A11.500 11.500 0 0 1 22 6.300H12a5.700 5.700 0 0 0-5 2.900L2 6.300A11.500 11.500 0 0 1 12 .5z" fill="#e33b2e"/><path d="M2 6.300l5 8.600a5.700 5.700 0 0 0 5 2.800l-3.500 5.400A11.500 11.500 0 0 1 2 6.300z" fill="#2da94f"/><circle cx="12" cy="12" r="5.300" fill="#fff"/><circle cx="12" cy="12" r="4.200" fill="#4285f4"/></svg>
  <!-- powerpoint -->
  <svg class="abs" style="left:305px;top:8px" width="25" height="25" viewBox="0 0 25 25"><path d="M13 3h11v19H13z" fill="#f4e4dc"/><path d="M13 3h11v19H13z" fill="none" stroke="#d24726" stroke-width="1"/><path d="M15 8h7M15 16h7M15 18.500h7" stroke="#d24726" stroke-width="1.200"/><circle cx="18.500" cy="11.500" r="2.800" fill="#d24726"/><path d="M1 3.500L14.500 1v23L1 21.500z" fill="#d24726"/><path d="M5 8h3.500c2 0 3 1.200 3 2.800s-1.200 2.900-3.200 2.900H6.800V17H5zM6.800 9.600v2.600h1.400c1 0 1.500-.5 1.500-1.300s-.5-1.300-1.500-1.300z" fill="#fff"/></svg>
  <!-- chrome active -->
  <div class="abs" style="left:343px;top:0;width:48px;height:40px;background:#525d6b"></div>
  <div class="abs" style="left:343px;top:38px;width:48px;height:2px;background:#8ac0ec"></div>
  <svg class="abs" style="left:355px;top:8px" width="24" height="24" viewBox="0 0 24 24"><circle cx="12" cy="12" r="11.500" fill="#fbc116"/><path d="M12 .5A11.500 11.500 0 0 1 22 6.300H12a5.700 5.700 0 0 0-5 2.900L2 6.300A11.500 11.500 0 0 1 12 .5z" fill="#e33b2e"/><path d="M2 6.300l5 8.600a5.700 5.700 0 0 0 5 2.800l-3.500 5.400A11.500 11.500 0 0 1 2 6.300z" fill="#2da94f"/><circle cx="12" cy="12" r="5.300" fill="#fff"/><circle cx="12" cy="12" r="4.200" fill="#4285f4"/></svg>
  <div class="abs" style="left:365px;top:18px;width:15px;height:15px;border-radius:8px;background:#e8336d;color:#fff;font-size:8.500px;line-height:15px;text-align:center">H</div>
  <!-- word -->
  <div class="abs" style="left:396px;top:38px;width:40px;height:2px;background:#8ac0ec"></div>
  <svg class="abs" style="left:403px;top:8px" width="25" height="25" viewBox="0 0 25 25"><path d="M13 3h11v19H13z" fill="#fff"/><path d="M13 3h11v19H13z" fill="none" stroke="#2b579a" stroke-width="1"/><path d="M15 6.500h7M15 9h7M15 11.500h7M15 14h7M15 16.500h7M15 19h7" stroke="#2b579a" stroke-width="1.100"/><path d="M1 3.500L14.500 1v23L1 21.500z" fill="#2b579a"/><path d="M3.200 8.500h1.600l1 5.500 1.200-5.500h1.500l1.200 5.500 1-5.500h1.500L10.400 16.500H8.800L7.700 11.400 6.600 16.500H5z" fill="#fff"/></svg>
  <!-- tray -->
  <svg class="abs" style="left:1144px;top:14px" width="14" height="10" viewBox="0 0 14 10"><path d="M1 8.500l6-6 6 6" stroke="#fff" stroke-width="1.300" fill="none"/></svg>
  <svg class="abs" style="left:1166px;top:12px" width="18" height="16" viewBox="0 0 18 16"><rect x="3.600" y="1.600" width="13" height="9" fill="none" stroke="#fff" stroke-width="1.100"/><rect x="1" y="1" width="5" height="6" fill="#243040" stroke="#fff" stroke-width="1"/><path d="M2.500 3h2M2.500 5h2" stroke="#fff" stroke-width=".8"/><path d="M10 11v3M6 14.500h8" stroke="#fff" stroke-width="1.100"/></svg>
  <svg class="abs" style="left:1190px;top:11px" width="18" height="18" viewBox="0 0 18 18"><path d="M1 6.500h2.500L7 3v12l-3.500-3.500H1z" fill="none" stroke="#fff" stroke-width="1.100"/><path d="M9.500 6.500a3.500 3.500 0 0 1 0 5M11.800 4.500a6.500 6.500 0 0 1 0 9M14 2.500a9.500 9.500 0 0 1 0 13" stroke="#fff" stroke-width="1.100" fill="none"/></svg>
  <div class="abs" style="left:1218px;top:13.500px;font-size:11.400px;color:#fff;letter-spacing:-.3px">УКР</div>
  <div class="abs" style="left:1246px;top:4.500px;width:66px;text-align:center;font-size:11.400px;color:#fff;letter-spacing:-.4px">13:29</div>
  <div class="abs" style="left:1246px;top:22.500px;width:66px;text-align:center;font-size:11.400px;color:#fff;letter-spacing:-.4px">27.06.2023</div>
  <svg class="abs" style="left:1324px;top:11px" width="18" height="17" viewBox="0 0 18 17"><path d="M1 1h16v11H6l-3.500 3.500V12H1z" fill="#fff"/><path d="M4 4h10M4 6.500h10M4 9h10" stroke="#243040" stroke-width=".9"/></svg>
  <div class="abs" style="left:1332px;top:18.500px;width:17px;height:17px;border-radius:9px;background:#3a3a3a;border:1px solid #243040;color:#fff;font-size:10.500px;line-height:14px;text-align:center;font-weight:bold">1</div>
<!--TASK-END-->
</div>
</body>
</html>
